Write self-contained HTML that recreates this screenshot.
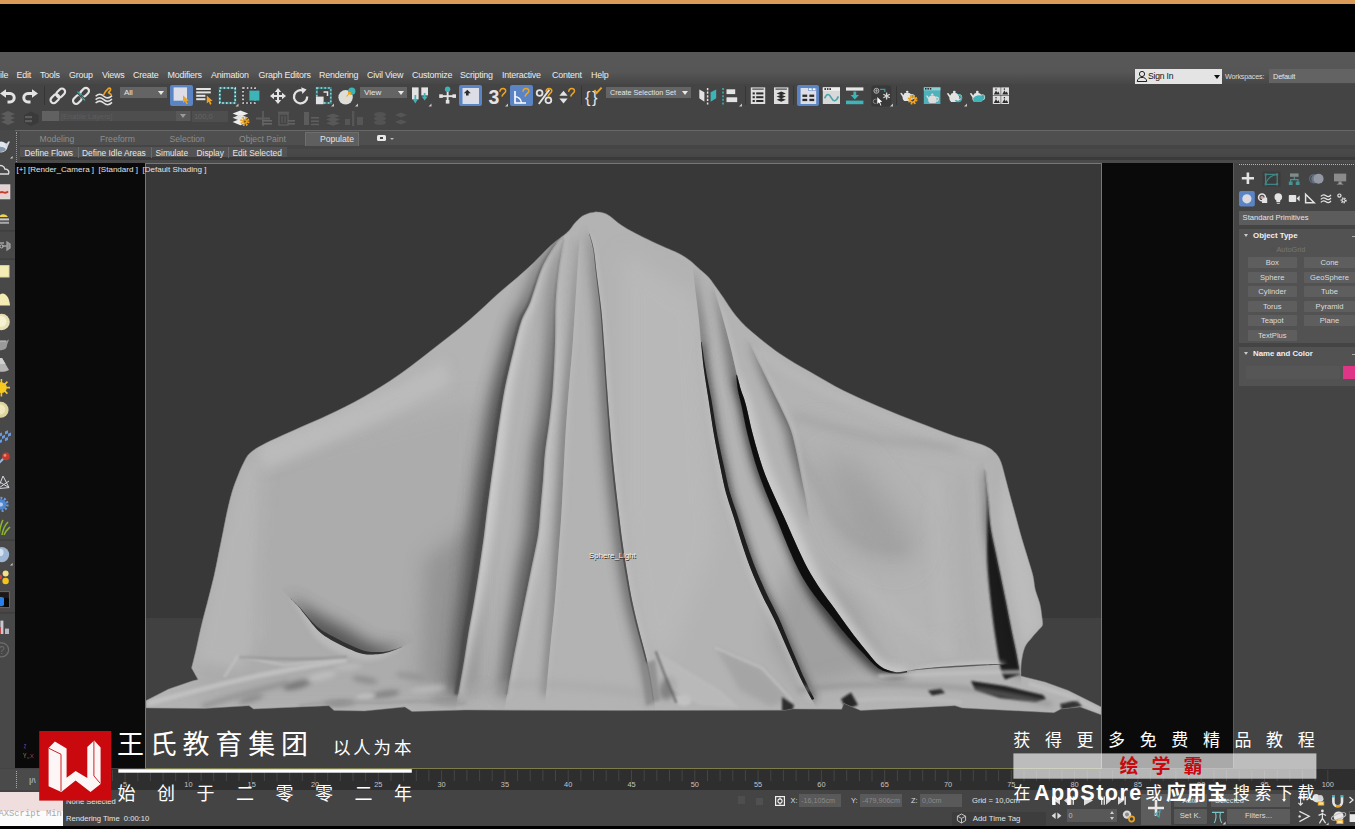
<!DOCTYPE html>
<html><head><meta charset="utf-8"><title>3ds Max</title>
<style>
*{box-sizing:border-box;margin:0;padding:0}
html,body{width:1355px;height:829px;overflow:hidden;background:#444}
body{font-family:"Liberation Sans",sans-serif;font-size:9px;color:#e0e0e0;position:relative}
.a{position:absolute}
.t{position:absolute;white-space:nowrap;line-height:1}
#orange{left:0;top:0;width:1355px;height:4px;background:#dc9a58}
#blk{left:0;top:4px;width:1355px;height:48px;background:#000}
#menubar{left:0;top:52px;width:1355px;height:32px;background:linear-gradient(#585858 0,#565656 62%,#4b4b4b 88%,#474747 100%)}
#menubar .t{top:18.5px;font-size:8.9px;letter-spacing:-0.2px;color:#ececec}
#tb{left:0;top:82px;width:1355px;height:48px;background:linear-gradient(rgba(68,68,68,0) 2px,#444 2px)}
#ribbon{left:0;top:130px;width:1355px;height:33px;background:#484848;border-top:1px solid #686868}
#vp{left:15px;top:163px;width:1218px;height:605px;background:#0a0a0a}
#frame{left:145px;top:163px;width:957px;height:606px;background:#383838;border:1px solid #7c7c4c;overflow:hidden}
#floor{left:0;top:453.5px;width:957px;height:152px;background:#414141}
#ltb{left:0;top:130px;width:15px;height:638px;background:#484848}
#rp{left:1233px;top:163px;width:122px;height:605px;background:#444}
#tl{left:0;top:769px;width:1355px;height:21px;background:#2e2e2e}
#sb{left:0;top:790px;width:1355px;height:36px;background:#444}
#bot{left:0;top:826px;width:1355px;height:3px;background:#000}
.dd{position:absolute;background:#646464;color:#e6e6e6;font-size:8px;line-height:11px;height:11px;padding-left:4px;white-space:nowrap;overflow:hidden}
.dd:after{content:"";position:absolute;right:3px;top:4px;border:3px solid transparent;border-top:4px solid #e8e8e8;border-bottom:0}
.hl{position:absolute;background:#5b84c4;border-radius:2px}
.btn{position:absolute;background:#5e5e5e;color:#dcdcdc;font-size:7.6px;text-align:center;height:11px;line-height:11px;border-radius:1px;white-space:nowrap}
.fld{position:absolute;background:#595959;color:#8a8a8a;font-size:7.6px;height:13px;line-height:13px;padding-left:2px;white-space:nowrap;overflow:hidden}
</style>
</head><body>
<div class="a" id="orange"></div><div class="a" id="blk"></div>
<div class="a" id="menubar"><span class="t" style="left:0px">ile</span><span class="t" style="left:16.5px">Edit</span><span class="t" style="left:40px">Tools</span><span class="t" style="left:69px">Group</span><span class="t" style="left:102px">Views</span><span class="t" style="left:133px">Create</span><span class="t" style="left:167.5px">Modifiers</span><span class="t" style="left:211px">Animation</span><span class="t" style="left:258.5px">Graph Editors</span><span class="t" style="left:319px">Rendering</span><span class="t" style="left:367px">Civil View</span><span class="t" style="left:412px">Customize</span><span class="t" style="left:460px">Scripting</span><span class="t" style="left:502px">Interactive</span><span class="t" style="left:552px">Content</span><span class="t" style="left:591px">Help</span><div class="a" style="left:1135px;top:16.8px;width:87px;height:14.8px;background:#e4e4e4"></div><svg class="a" style="left:1136px;top:18px" width="12" height="12" viewBox="0 0 12 12"><circle cx="6" cy="4" r="2.6" fill="none" stroke="#222" stroke-width="1"/><path d="M1.2 11.5C1.6 8.5 3.5 7.4 6 7.4S10.4 8.5 10.8 11.5Z" fill="none" stroke="#222" stroke-width="1"/></svg><span class="t" style="left:1148px;top:20.3px;font-size:8.6px;color:#111">Sign In</span><div class="a" style="left:1214px;top:22.6px;border:3px solid transparent;border-top:4.5px solid #111;border-bottom:0"></div><span class="t" style="left:1225px;top:21px;font-size:7.2px;color:#ddd">Workspaces:</span><div class="a" style="left:1269px;top:17.4px;width:86px;height:14px;background:#636363"></div><span class="t" style="left:1273px;top:21px;font-size:7.4px;color:#e6e6e6">Default</span></div>
<div class="a" id="tb"><div class="dd" style="left:120px;top:5px;width:47px">All</div><div class="dd" style="left:360px;top:5px;width:47px">View</div><div class="dd" style="left:606px;top:5px;width:85px;font-size:7.2px">Create Selection Set</div><div class="hl" style="left:170px;top:3px;width:23px;height:21px"></div><div class="hl" style="left:459px;top:3px;width:23px;height:21px"></div><div class="hl" style="left:510px;top:3px;width:23px;height:21px"></div><div class="hl" style="left:797px;top:3px;width:22px;height:21px"></div><div class="a" style="left:44px;top:4px;width:1px;height:19px;background:#363636"></div><div class="a" style="left:581px;top:4px;width:1px;height:19px;background:#363636"></div><div class="a" style="left:745px;top:4px;width:1px;height:19px;background:#363636"></div><div class="a" style="left:793px;top:4px;width:1px;height:19px;background:#363636"></div><div class="a" style="left:896px;top:4px;width:1px;height:19px;background:#363636"></div><svg class="a" style="left:0;top:0" width="1355" height="48" viewBox="0 82 1355 48"><path d="M5 93.5H10A4.2 4.2 0 0 1 10 101.9H7.5" fill="none" stroke="#e3e3e3" stroke-width="3"/><polygon points="0,93.5 6,89.2 6,97.8" fill="#e3e3e3"/><path d="M33 93.5H28A4.2 4.2 0 0 0 28 101.9H30.5" fill="none" stroke="#e3e3e3" stroke-width="3"/><polygon points="38,93.5 32,89.2 32,97.8" fill="#e3e3e3"/><g fill="none" stroke="#e3e3e3" stroke-width="2.2"><rect x="-4.9" y="-3.1" width="9.8" height="6.2" rx="3.1" transform="translate(54.9 98.8) rotate(-45)"/><rect x="-4.9" y="-3.1" width="9.8" height="6.2" rx="3.1" transform="translate(60.699999999999996 93) rotate(-45)"/></g><g fill="none" stroke="#e3e3e3" stroke-width="2.2"><rect x="-4.9" y="-3.1" width="9.8" height="6.2" rx="3.1" transform="translate(77.4 99.5) rotate(-45)"/><rect x="-4.9" y="-3.1" width="9.8" height="6.2" rx="3.1" transform="translate(84.6 92.3) rotate(-45)"/></g><path d="M78.6 93.4L83.6 98.6" stroke="#444" stroke-width="2.6"/><path d="M77.4 91.6L81 95.4M81.6 96.6L85 100.4" stroke="#3cb4b8" stroke-width="1.1"/><path d="M95.6 96.2C98.5 93.60000000000001 101 93.60000000000001 103.8 96.2S109 98.60000000000001 112 95.60000000000001" fill="none" stroke="#e3e3e3" stroke-width="1.5"/><path d="M95.6 99.6C98.5 97.0 101 97.0 103.8 99.6S109 102.0 112 99.0" fill="none" stroke="#e3e3e3" stroke-width="1.5"/><path d="M95.6 103C98.5 100.4 101 100.4 103.8 103S109 105.4 112 102.4" fill="none" stroke="#e3e3e3" stroke-width="1.5"/><path d="M103.5 95C105 92 106 90.5 107.5 89.5C108.5 87.5 110.8 87.8 110.6 89.6C110.5 91 109 91.4 108.6 92.6L111 94.4" fill="none" stroke="#f0a41e" stroke-width="1.6" stroke-linecap="round"/><rect x="173.6" y="87.4" width="13.4" height="13.3" fill="#dcdde6"/><polygon points="183.0,95.2 183.0,103.0 184.9,101.3 186.3,104.3 187.8,103.7 186.4,100.7 188.9,100.7" fill="#f0a41e"/><rect x="196.2" y="88" width="14.6" height="2" fill="#e3e3e3"/><rect x="196.2" y="91.4" width="14.6" height="2" fill="#e3e3e3"/><rect x="196.2" y="94.8" width="9.2" height="2" fill="#e3e3e3"/><rect x="196.2" y="98.2" width="9.2" height="2" fill="#e3e3e3"/><polygon points="206.8,95.6 206.8,103.4 208.7,101.7 210.1,104.7 211.6,104.1 210.2,101.1 212.7,101.1" fill="#f0a41e"/><rect x="219.8" y="88" width="15.4" height="15" fill="none" stroke="#2c7d80" stroke-width="2.2"/><rect x="219.8" y="88" width="15.4" height="15" fill="none" stroke="#d4ecec" stroke-width="1.6" stroke-dasharray="1.6 2.2"/><polygon points="238.5,106.6 238.5,103.6 235.5,106.6" fill="#c8c8c8"/><rect x="243" y="88" width="12" height="15" fill="none" stroke="#3a3a3a" stroke-width="2.2"/><rect x="243" y="88" width="12" height="15" fill="none" stroke="#e6e6e6" stroke-width="1.6" stroke-dasharray="1.6 2.2"/><rect x="249.4" y="90.6" width="10" height="10" fill="#3cb4b8"/><path d="M278 88L281.2 92H279V95H282V92.8L286 96L282 99.2V97H279V100H281.2L278 104L274.8 100H277V97H274V99.2L270 96L274 92.8V95H277V92H274.8Z" fill="#e3e3e3"/><path d="M303.5 90.8A6.6 6.6 0 1 0 307.2 96.5" fill="none" stroke="#e3e3e3" stroke-width="2.3"/><polygon points="301.2,87.2 306.6,89.6 302.4,94" fill="#e3e3e3"/><rect x="316.8" y="88" width="14" height="15" fill="none" stroke="#2c7d80" stroke-width="2.2"/><rect x="316.8" y="88" width="14" height="15" fill="none" stroke="#9fd6d8" stroke-width="1.4" stroke-dasharray="1.6 2.2"/><rect x="316" y="96.6" width="7.6" height="7.6" fill="#e3e3e3"/><path d="M323.5 92H327.5V96" fill="none" stroke="#e3e3e3" stroke-width="1.5"/><polygon points="334,106.6 334,103.6 331,106.6" fill="#c8c8c8"/><circle cx="345.6" cy="97.3" r="7.2" fill="#deded8"/><circle cx="351.8" cy="91.2" r="3.6" fill="#3cb4b8"/><path d="M346.5 96.5L350 92.5M348 92.6H350.3V95" stroke="#f0a41e" stroke-width="1.1" fill="none"/><polygon points="358,106.6 358,103.6 355,106.6" fill="#c8c8c8"/><rect x="412" y="87.4" width="6.6" height="12" fill="#e3e3e3"/><polygon points="412.6,99 418,99 415.3,103.4" fill="#3cb4b8"/><rect x="421.3" y="87.4" width="6.7" height="8" fill="#e3e3e3"/><polygon points="421.6,96.4 427.7,96.4 424.6,100.6" fill="#3cb4b8"/><rect x="423.8" y="93" width="1.7" height="4" fill="#3cb4b8"/><rect x="414.5" y="95" width="1.7" height="4.5" fill="#3cb4b8"/><polygon points="431.5,106.6 431.5,103.6 428.5,106.6" fill="#c8c8c8"/><rect x="440" y="95.2" width="15.4" height="1.9" fill="#e3e3e3"/><rect x="446.7" y="89" width="1.9" height="13" fill="#e3e3e3"/><rect x="439.2" y="94.3" width="3.6" height="3.6" fill="#e3e3e3"/><rect x="452.4" y="94.3" width="3.6" height="3.6" fill="#e3e3e3"/><rect x="445.8" y="100" width="3.6" height="3.6" fill="#e3e3e3"/><circle cx="447.6" cy="89.2" r="2.7" fill="#3cb4b8"/><rect x="462.5" y="88" width="16.5" height="16" fill="#dcdde6"/><path d="M467.3 89.8L470.8 93.2H468.6V95.6H466V93.2H463.8Z" fill="#2b2b2b"/><text x="488.6" y="104" font-family="Liberation Sans" font-weight="bold" font-size="19.5" fill="#e3e3e3">3</text><path d="M500.0 91.2C500.3 87.8 505.8 87.6 505.7 91C505.6 93.2 502.9 93.3 502.1 96" fill="none" stroke="#f0a41e" stroke-width="1.5" stroke-linecap="round"/><polygon points="508,106.6 508,103.6 505,106.6" fill="#c8c8c8"/><path d="M515 91V103H526" fill="none" stroke="#fff" stroke-width="1.6"/><path d="M515 96.6A6.4 6.4 0 0 1 521.4 103" fill="none" stroke="#fff" stroke-width="1.4"/><path d="M523.1 91.2C523.4 87.8 528.9 87.6 528.8000000000001 91C528.7 93.2 526.0 93.3 525.2 96" fill="none" stroke="#f0a41e" stroke-width="1.5" stroke-linecap="round"/><circle cx="539.6" cy="93" r="2.9" fill="none" stroke="#e3e3e3" stroke-width="1.8"/><circle cx="548.4" cy="100.3" r="2.9" fill="none" stroke="#e3e3e3" stroke-width="1.8"/><path d="M549.4 89.6L538.8 104" stroke="#e3e3e3" stroke-width="1.9"/><path d="M546.1 91.2C546.4 87.8 551.9 87.6 551.8000000000001 91C551.7 93.2 549.0 93.3 548.2 96" fill="none" stroke="#f0a41e" stroke-width="1.5" stroke-linecap="round"/><polygon points="559.4,95.8 567.6,95.8 563.5,90.8" fill="#e3e3e3"/><polygon points="559.4,98.4 567.6,98.4 563.5,103.4" fill="#e3e3e3"/><path d="M568.8 91.2C569.0999999999999 87.8 574.5999999999999 87.6 574.5 91C574.4 93.2 571.6999999999999 93.3 570.9 96" fill="none" stroke="#f0a41e" stroke-width="1.5" stroke-linecap="round"/><text x="585" y="102.6" font-family="Liberation Sans" font-size="16.5" fill="#e3e3e3" letter-spacing="1.6">{}</text><path d="M594.4 90.2L596.6 93L601.6 87.6" fill="none" stroke="#f0a41e" stroke-width="1.9"/><polygon points="699.3,89.6 704.4,92.2 704.4,101.8 699.3,98.2" fill="#e3e3e3"/><polygon points="710.6,92.2 716.2,89.6 716.2,98.2 710.6,101.8" fill="#3cb4b8"/><path d="M707.6 88V104.6" stroke="#f3d9d9" stroke-width="1.5" stroke-dasharray="2.2 1.4"/><path d="M723 88V104.6" stroke="#3cb4b8" stroke-width="1.5" stroke-dasharray="2 1.6"/><rect x="726.5" y="89.3" width="8.7" height="4.8" fill="#e3e3e3"/><rect x="726.5" y="97.3" width="10.7" height="4.8" fill="#e3e3e3"/><polygon points="742,106.6 742,103.6 739,106.6" fill="#c8c8c8"/><rect x="750.8" y="87.4" width="14.4" height="16.6" fill="#dedede"/><rect x="752.3" y="88.6" width="11.4" height="1" fill="#2b2b2b"/><rect x="752.6" y="92.4" width="2.2" height="2" fill="#2b2b2b"/><rect x="756.2" y="92.4" width="7.2" height="2" fill="#2b2b2b"/><rect x="752.6" y="96.2" width="2.2" height="2" fill="#2b2b2b"/><rect x="756.2" y="96.2" width="7.2" height="2" fill="#2b2b2b"/><rect x="752.6" y="100" width="2.2" height="2" fill="#2b2b2b"/><rect x="756.2" y="100" width="7.2" height="2" fill="#2b2b2b"/><rect x="774" y="87.4" width="14.4" height="16.6" fill="#dedede"/><rect x="775.5" y="88.6" width="11.4" height="1" fill="#2b2b2b"/><path d="M776.6 93.4L781.2 91.5L785.8 93.4L781.2 95.30000000000001Z" fill="#2b2b2b"/><path d="M776.6 96.6L781.2 94.69999999999999L785.8 96.6L781.2 98.5Z" fill="#2b2b2b"/><path d="M776.6 99.8L781.2 97.89999999999999L785.8 99.8L781.2 101.7Z" fill="#2b2b2b"/><rect x="800.6" y="88" width="15.6" height="16" fill="#dcdde6"/><rect x="808.6" y="88" width="3.4" height="2.6" fill="#fff" stroke="#5b84c4" stroke-width="0.6"/><rect x="812.4" y="88" width="3.4" height="2.6" fill="#fff" stroke="#5b84c4" stroke-width="0.6"/><rect x="802.4" y="94.6" width="4.8" height="2.3" fill="#2b2b2b"/><rect x="802.4" y="98.8" width="4.8" height="2.3" fill="#2b2b2b"/><rect x="809.4" y="94.6" width="4.8" height="2.3" fill="#2b2b2b"/><rect x="809.4" y="98.8" width="4.8" height="2.3" fill="#2b2b2b"/><rect x="822.8" y="87.4" width="17.2" height="16.6" fill="#d9d9d9"/><rect x="822.8" y="87.4" width="17.2" height="3.4" fill="#eee"/><rect x="824.4" y="88.2" width="1.6" height="1.7" fill="#2b2b2b"/><rect x="826.9" y="88.2" width="1.6" height="1.7" fill="#2b2b2b"/><rect x="829.4" y="88.2" width="1.6" height="1.7" fill="#2b2b2b"/><path d="M824.6 98.4C826.6 93.4 829 93.4 831.2 97.6S836 102 838.4 96.4" fill="none" stroke="#4aa6ad" stroke-width="1.6"/><rect x="846" y="87.4" width="17.4" height="3.2" fill="#e6e6e6"/><rect x="846" y="100.6" width="17.4" height="3.6" fill="#3cb4b8"/><rect x="853.4" y="91.6" width="2.8" height="4" fill="#3cb4b8"/><polygon points="850.6,95 859,95 854.8,99.4" fill="#3cb4b8"/><rect x="871.3" y="85.6" width="20" height="21" rx="2.5" fill="#393939"/><circle cx="876.4" cy="90.8" r="2.5" fill="none" stroke="#bdbdbd" stroke-width="0.9"/><path d="M874.6 90.8H878.2M876.4 89V92.6" stroke="#bdbdbd" stroke-width="0.7"/><path d="M880 89.4H884.8V92" fill="none" stroke="#3c9aa0" stroke-width="1.3"/><path d="M886.6 92.4V99.6M883.4 94.2L889.8 97.8M889.8 94.2L883.4 97.8" stroke="#d8d8d8" stroke-width="1.3"/><circle cx="875.4" cy="101.4" r="2.2" fill="none" stroke="#8a8a8a" stroke-width="0.9"/><polygon points="876.8,96.2 876.8,104.8 878.9,102.9 880.5,106.3 882.0,105.5 880.6,102.3 883.3,102.3" fill="#fff" stroke="#222" stroke-width="0.8"/><polygon points="893,106.6 893,103.6 890,106.6" fill="#c8c8c8"/><path d="M904.2 93.6C904.7 92.6 909.7 92.6 910.2 93.6C912.5 95.1 912.8 99.1 910.6 101.1L904.2 101.1C902.8 99.8 902.4 98.2 902.6 97.0L900.2 93.2L901.6 92.8L903.4 95.2Z" fill="#e3e3e3"/><ellipse cx="907.2" cy="91.8" rx="1.3" ry="1.1" fill="#e3e3e3"/><path d="M911.2 94.6C914.8 94.0 914.8 99.2 911.4 99.2" fill="none" stroke="#e3e3e3" stroke-width="1.3"/><circle cx="912.6" cy="99.6" r="3.6" fill="none" stroke="#f0a41e" stroke-width="2.6" stroke-dasharray="1.6 1.22"/><circle cx="912.6" cy="99.6" r="2.6" fill="none" stroke="#f0a41e" stroke-width="1.6"/><rect x="923.8" y="87.4" width="16.6" height="16.6" fill="#4fb2ba"/><rect x="923.8" y="87.4" width="16.6" height="3" fill="#8fd0d4"/><rect x="925" y="88" width="1.5" height="1.6" fill="#2b2b2b"/><rect x="927.4" y="88" width="1.5" height="1.6" fill="#2b2b2b"/><rect x="929.8" y="88" width="1.5" height="1.6" fill="#2b2b2b"/><path d="M929.6 96.2C930.0 95.3 934.5 95.3 935.0 96.2C937.1 97.5 937.3 101.1 935.4 102.9L929.6 102.9C928.3 101.8 928.0 100.3 928.2 99.3L926.0 95.8L927.3 95.5L928.9 97.6Z" fill="#dcdcdc"/><ellipse cx="932.3" cy="94.6" rx="1.2" ry="1.0" fill="#dcdcdc"/><path d="M935.9 97.1C939.1 96.6 939.1 101.2 936.1 101.2" fill="none" stroke="#dcdcdc" stroke-width="1.2"/><path d="M951.1 93.9C951.6 92.8 957.0 92.8 957.5 93.9C960.0 95.5 960.3 99.8 957.9 101.9L951.1 101.9C949.6 100.5 949.2 98.8 949.4 97.5L946.8 93.5L948.3 93.0L950.2 95.6Z" fill="#e3e3e3"/><ellipse cx="954.3" cy="92.0" rx="1.4" ry="1.2" fill="#e3e3e3"/><path d="M958.6 95.0C962.4 94.3 962.4 99.9 958.8 99.9" fill="none" stroke="#e3e3e3" stroke-width="1.4"/><path d="M955.4 100.2A3.4 3.4 0 1 0 958 94.8" fill="none" stroke="#3cb4b8" stroke-width="1.5"/><polygon points="967,106.6 967,103.6 964,106.6" fill="#c8c8c8"/><path d="M974.1 93.9C974.6 92.8 980.0 92.8 980.5 93.9C983.0 95.5 983.3 99.8 980.9 101.9L974.1 101.9C972.6 100.5 972.2 98.8 972.4 97.5L969.8 93.5L971.3 93.0L973.2 95.6Z" fill="#e3e3e3"/><ellipse cx="977.3" cy="92.0" rx="1.4" ry="1.2" fill="#e3e3e3"/><path d="M981.6 95.0C985.4 94.3 985.4 99.9 981.8 99.9" fill="none" stroke="#e3e3e3" stroke-width="1.4"/><path d="M973.4 98C976 94.6 981.6 94.4 983.4 97.4C983.6 99.4 982.6 100.6 981.2 101.9L974.2 101.9C973.2 100.6 973 99.2 973.4 98Z" fill="#3cb4b8"/><path d="M981.6 95.2C984.6 95 984.6 99.2 982 99.4" stroke="#3cb4b8" stroke-width="1.3" fill="none"/><rect x="992.8" y="87.4" width="7.8" height="8" fill="#dedede"/><path d="M993.8 94.4L996.0 90.4L997.4 92.80000000000001L998.4 91.4L999.8 94.4Z" fill="#2b2b2b"/><rect x="995.4" y="88.4" width="1.2" height="1.4" fill="#2b2b2b"/><rect x="992.8" y="96" width="7.8" height="8" fill="#dedede"/><path d="M993.8 103L996.0 99L997.4 101.4L998.4 100L999.8 103Z" fill="#2b2b2b"/><rect x="995.4" y="97" width="1.2" height="1.4" fill="#2b2b2b"/><rect x="1001.2" y="87.4" width="7.8" height="8" fill="#dedede"/><path d="M1002.2 94.4L1004.4000000000001 90.4L1005.8000000000001 92.80000000000001L1006.8000000000001 91.4L1008.2 94.4Z" fill="#2b2b2b"/><rect x="1003.8000000000001" y="88.4" width="1.2" height="1.4" fill="#2b2b2b"/><rect x="1001.2" y="96" width="7.8" height="8" fill="#dedede"/><path d="M1002.2 103L1004.4000000000001 99L1005.8000000000001 101.4L1006.8000000000001 100L1008.2 103Z" fill="#2b2b2b"/><rect x="1003.8000000000001" y="97" width="1.2" height="1.4" fill="#2b2b2b"/><path d="M1 114L8 111L15 114L8 117Z" fill="#5c5c5c"/><path d="M1 118L8 115L15 118L8 121Z" fill="#5c5c5c"/><path d="M1 122L8 119L15 122L8 125Z" fill="#5c5c5c"/><path d="M24 115L31 111.5L38.6 115V122.5L31 126L24 122.5Z" fill="#3a3a3a"/><rect x="25" y="116" width="7" height="2.2" fill="#5c5c5c"/><rect x="25" y="120" width="7" height="2.2" fill="#5c5c5c"/><path d="M232.6 113.6L240.4 110.39999999999999L248.2 113.6L240.4 116.8Z" fill="#eeeeee"/><path d="M232.6 117.8L240.4 114.6L248.2 117.8L240.4 121.0Z" fill="#e2e2e2"/><path d="M232.6 122L240.4 118.8L248.2 122L240.4 125.2Z" fill="#eeeeee"/><circle cx="244.8" cy="121.4" r="3.4" fill="none" stroke="#f0a41e" stroke-width="2.6" stroke-dasharray="1.5 1.17"/><circle cx="244.8" cy="121.4" r="2.4" fill="#f0a41e"/><circle cx="244.8" cy="121.4" r="1" fill="#555"/><path d="M263 111V126M256 118.5H270" stroke="#5c5c5c" stroke-width="1.8"/><rect x="262" y="120" width="10" height="1.6" fill="#666"/><rect x="262" y="123" width="10" height="1.6" fill="#666"/><rect x="279" y="114" width="9" height="11" fill="none" stroke="#5c5c5c" stroke-width="1.4"/><path d="M282 116V123M285 116V123" stroke="#5c5c5c" stroke-width="1.2"/><rect x="278" y="111.6" width="11" height="1.8" fill="#5c5c5c"/><rect x="288" y="120" width="7" height="1.6" fill="#626262"/><rect x="288" y="123" width="7" height="1.6" fill="#626262"/><rect x="304" y="112" width="5" height="13" fill="#5c5c5c"/><rect x="311" y="117" width="8" height="1.6" fill="#5e5e5e"/><rect x="311" y="120.4" width="8" height="1.6" fill="#5e5e5e"/><rect x="311" y="123.6" width="8" height="1.6" fill="#5e5e5e"/><path d="M326 116L333 113.4L340 116L333 118.6Z" fill="#585858"/><path d="M326 119.6L333 117.0L340 119.6L333 122.19999999999999Z" fill="#585858"/><path d="M326 123.2L333 120.60000000000001L340 123.2L333 125.8Z" fill="#585858"/><rect x="352" y="111" width="2.4" height="15" fill="#565656"/><rect x="357" y="117" width="6" height="8" fill="#565656"/><rect x="345" y="119" width="5" height="6" fill="#565656"/><ellipse cx="380" cy="114.5" rx="6" ry="2.4" fill="#535353"/><ellipse cx="380" cy="118.5" rx="6" ry="2.4" fill="#535353"/><ellipse cx="380" cy="122.5" rx="6" ry="2.4" fill="#535353"/><path d="M395 115L401 112.5L407 115L401 117.5ZM395 122L401 119.5L407 122L401 124.5Z" fill="#555"/></svg><div class="a" style="left:42px;top:29px;width:149px;height:10px;background:#4e4e4e"></div><div class="a" style="left:42px;top:29px;width:17px;height:10px;background:#616161"></div><span class="t" style="left:61px;top:30.5px;font-size:7.4px;color:#5d5d5d">[Enable Layers]</span><div class="a" style="left:176px;top:29px;width:14px;height:10px;background:#585858"></div><div class="a" style="left:180px;top:32px;border:3px solid transparent;border-top:4px solid #9a9a9a;border-bottom:0"></div><div class="a" style="left:192px;top:29px;width:36px;height:11px;background:#4e4e4e"></div><span class="t" style="left:194px;top:31px;font-size:7.4px;color:#646464">100,0</span></div>
<div class="a" id="ribbon"><div class="a" style="left:16px;top:1px;width:1px;height:30px;border-left:1px dotted #999"></div><div class="a" style="left:20px;top:0;width:1335px;height:14px;background:#4f4f4f"></div><div class="a" style="left:20px;top:14px;width:1335px;height:3.5px;background:#454545"></div><div class="a" style="left:20px;top:17.5px;width:1335px;height:8.5px;background:linear-gradient(#4a4a4a,#464646)"></div><span class="t" style="left:39.5px;top:4px;font-size:8.6px;color:#8d8d8d">Modeling</span><span class="t" style="left:100px;top:4px;font-size:8.6px;color:#8d8d8d">Freeform</span><span class="t" style="left:169.5px;top:4px;font-size:8.6px;color:#8d8d8d">Selection</span><span class="t" style="left:239px;top:4px;font-size:8.6px;color:#8d8d8d">Object Paint</span><div class="a" style="left:305px;top:1px;width:54px;height:14px;background:#5f5f5f;border:1px solid #6e6e6e;border-bottom:0"></div><span class="t" style="left:320px;top:4px;font-size:8.6px;color:#e4e4e4">Populate</span><div class="a" style="left:377px;top:4px;width:9px;height:6px;background:#e8e8e8;border-radius:1.5px"></div><div class="a" style="left:380px;top:6px;width:3px;height:2px;background:#444"></div><div class="a" style="left:390px;top:7px;border:2px solid transparent;border-top:2.5px solid #bbb;border-bottom:0"></div><div class="a" style="left:20px;top:15.5px;width:267px;height:11.5px;background:#535353"></div><div class="a" style="left:20px;top:26px;width:1335px;height:2.6px;background:#3a3a3a"></div><div class="a" style="left:20px;top:28.6px;width:1335px;height:4px;background:#4a4a4a"></div><span class="t" style="left:24.5px;top:17.5px;font-size:8.4px;color:#e6e6e6">Define Flows</span><span class="t" style="left:82px;top:17.5px;font-size:8.4px;color:#e6e6e6">Define Idle Areas</span><span class="t" style="left:155.5px;top:17.5px;font-size:8.4px;color:#e6e6e6">Simulate</span><span class="t" style="left:196.5px;top:17.5px;font-size:8.4px;color:#e6e6e6">Display</span><span class="t" style="left:232.5px;top:17.5px;font-size:8.4px;color:#e6e6e6">Edit Selected</span><div class="a" style="left:77.5px;top:16px;width:1px;height:11px;background:#6a6a6a"></div><div class="a" style="left:150.5px;top:16px;width:1px;height:11px;background:#6a6a6a"></div><div class="a" style="left:228px;top:16px;width:1px;height:11px;background:#6a6a6a"></div></div>

<div class="a" id="vp"></div>
<div class="a" id="frame"><div class="a" id="floor"></div>

<svg class="a" style="left:0;top:0" width="955" height="604" viewBox="146 164 955 604"><defs><filter id="b1" filterUnits="userSpaceOnUse" x="100" y="150" width="1050" height="640"><feGaussianBlur stdDeviation="0.6"/></filter><filter id="b2" filterUnits="userSpaceOnUse" x="100" y="150" width="1050" height="640"><feGaussianBlur stdDeviation="1"/></filter><filter id="b3" filterUnits="userSpaceOnUse" x="100" y="150" width="1050" height="640"><feGaussianBlur stdDeviation="1.6"/></filter><filter id="b4" filterUnits="userSpaceOnUse" x="100" y="150" width="1050" height="640"><feGaussianBlur stdDeviation="2.4"/></filter><filter id="b6" filterUnits="userSpaceOnUse" x="100" y="150" width="1050" height="640"><feGaussianBlur stdDeviation="4"/></filter><filter id="b8" filterUnits="userSpaceOnUse" x="100" y="150" width="1050" height="640"><feGaussianBlur stdDeviation="5"/></filter><filter id="b9" filterUnits="userSpaceOnUse" x="100" y="150" width="1050" height="640"><feGaussianBlur stdDeviation="6"/></filter><filter id="b12" filterUnits="userSpaceOnUse" x="100" y="150" width="1050" height="640"><feGaussianBlur stdDeviation="8"/></filter><filter id="b14" filterUnits="userSpaceOnUse" x="100" y="150" width="1050" height="640"><feGaussianBlur stdDeviation="10"/></filter><filter id="b22" filterUnits="userSpaceOnUse" x="100" y="150" width="1050" height="640"><feGaussianBlur stdDeviation="16"/></filter><clipPath id="cc"><path d="M596.3 211.8C594.9 212.1 590.5 212.6 588.0 213.5C585.5 214.4 583.3 215.2 581.0 217.0C578.7 218.8 576.2 221.5 574.0 224.0C571.8 226.5 571.5 228.4 567.6 232.0C563.7 235.6 556.3 240.5 550.7 245.6C545.1 250.7 539.4 257.1 533.8 262.5C528.2 267.9 522.5 272.8 516.9 277.7C511.3 282.6 507.9 285.0 500.0 292.0C492.1 299.0 479.6 311.1 469.6 319.7C459.6 328.3 451.6 334.4 440.0 343.5C428.4 352.6 412.8 365.1 400.0 374.0C387.2 382.9 375.7 390.1 363.5 397.0C351.3 403.9 339.1 409.8 327.0 415.5C314.9 421.2 301.3 426.8 291.0 431.5C280.7 436.2 271.8 439.9 265.0 443.5C258.2 447.1 253.7 449.6 250.0 453.0C246.3 456.4 245.2 459.8 243.0 464.0C240.8 468.2 238.8 473.3 237.0 478.0C235.2 482.7 233.7 486.3 232.0 492.0C230.3 497.7 228.5 505.3 227.0 512.0C225.5 518.7 224.4 525.0 223.0 532.0C221.6 539.0 220.0 546.7 218.5 554.0C217.0 561.3 215.7 568.7 214.0 576.0C212.3 583.3 210.3 590.8 208.5 598.0C206.7 605.2 204.6 612.7 203.0 619.0C201.4 625.3 200.2 630.5 199.0 636.0C197.8 641.5 196.8 646.7 195.5 652.0C194.2 657.3 192.2 665.3 191.5 668.0L198.0 679.6L192.0 681.0L168.6 689.0L146.0 700.6L146.0 708.0L204.0 708.6L249.0 705.7L253.6 709.0L329.0 705.7L334.0 710.5L364.6 711.0L404.8 707.0L412.0 711.6L465.0 710.0L625.0 710.6L785.0 710.2L792.0 709.0L841.7 709.3L844.0 703.4L860.6 710.5L955.0 705.7L962.0 708.0L1054.0 712.8L1061.0 709.0L1080.0 707.0L1101.5 715.0L1101.5 707.0L1068.4 690.4L1045.0 682.0L1021.0 676.0C1021.1 673.7 1020.8 666.8 1021.5 662.0C1022.2 657.2 1023.2 651.1 1025.0 647.0C1026.8 642.9 1029.7 640.4 1032.0 637.5C1034.3 634.6 1037.2 631.6 1039.0 629.5C1040.8 627.4 1042.1 627.1 1042.6 625.0C1043.1 622.9 1042.4 620.5 1042.0 617.0C1041.6 613.5 1041.1 608.5 1040.0 604.0C1038.9 599.5 1036.6 594.7 1035.4 590.0C1034.2 585.3 1034.3 581.1 1033.0 575.6C1031.7 570.1 1029.3 563.1 1027.5 557.0C1025.7 550.9 1023.8 545.3 1022.0 539.0C1020.2 532.7 1018.3 525.7 1016.5 519.0C1014.7 512.3 1012.8 505.5 1011.0 499.0C1009.2 492.5 1007.7 486.2 1006.0 480.0C1004.3 473.8 1002.9 466.7 1001.0 462.0C999.1 457.3 997.5 454.8 994.5 452.0C991.5 449.2 989.9 447.8 983.0 445.0C976.1 442.2 964.2 439.4 953.0 435.5C941.8 431.6 928.2 426.2 916.0 421.5C903.8 416.8 892.1 412.1 880.0 407.0C867.9 401.9 855.2 396.5 843.5 390.6C831.8 384.7 820.2 377.6 809.6 371.5C799.0 365.4 789.9 360.5 780.0 353.7C770.1 346.9 757.8 336.9 750.4 330.5C743.0 324.1 740.2 320.9 735.6 315.3C731.0 309.7 726.4 301.9 723.0 297.0C719.6 292.1 717.5 289.1 715.0 285.7C712.5 282.3 710.5 279.2 708.0 276.5C705.5 273.8 703.0 272.2 700.0 269.5C697.0 266.8 693.3 263.1 690.0 260.5C686.7 257.9 683.5 255.9 680.0 254.0C676.5 252.1 673.7 251.1 669.0 249.0C664.3 246.9 657.7 244.1 652.0 241.4C646.3 238.7 640.1 235.7 635.0 233.0C629.9 230.3 625.8 228.1 621.6 225.3C617.4 222.5 612.9 218.1 609.8 216.0C606.7 213.9 605.2 213.5 603.0 212.8C600.8 212.1 597.4 212.0 596.3 211.8Z"/></clipPath></defs><path d="M596.3 211.8C594.9 212.1 590.5 212.6 588.0 213.5C585.5 214.4 583.3 215.2 581.0 217.0C578.7 218.8 576.2 221.5 574.0 224.0C571.8 226.5 571.5 228.4 567.6 232.0C563.7 235.6 556.3 240.5 550.7 245.6C545.1 250.7 539.4 257.1 533.8 262.5C528.2 267.9 522.5 272.8 516.9 277.7C511.3 282.6 507.9 285.0 500.0 292.0C492.1 299.0 479.6 311.1 469.6 319.7C459.6 328.3 451.6 334.4 440.0 343.5C428.4 352.6 412.8 365.1 400.0 374.0C387.2 382.9 375.7 390.1 363.5 397.0C351.3 403.9 339.1 409.8 327.0 415.5C314.9 421.2 301.3 426.8 291.0 431.5C280.7 436.2 271.8 439.9 265.0 443.5C258.2 447.1 253.7 449.6 250.0 453.0C246.3 456.4 245.2 459.8 243.0 464.0C240.8 468.2 238.8 473.3 237.0 478.0C235.2 482.7 233.7 486.3 232.0 492.0C230.3 497.7 228.5 505.3 227.0 512.0C225.5 518.7 224.4 525.0 223.0 532.0C221.6 539.0 220.0 546.7 218.5 554.0C217.0 561.3 215.7 568.7 214.0 576.0C212.3 583.3 210.3 590.8 208.5 598.0C206.7 605.2 204.6 612.7 203.0 619.0C201.4 625.3 200.2 630.5 199.0 636.0C197.8 641.5 196.8 646.7 195.5 652.0C194.2 657.3 192.2 665.3 191.5 668.0L198.0 679.6L192.0 681.0L168.6 689.0L146.0 700.6L146.0 708.0L204.0 708.6L249.0 705.7L253.6 709.0L329.0 705.7L334.0 710.5L364.6 711.0L404.8 707.0L412.0 711.6L465.0 710.0L625.0 710.6L785.0 710.2L792.0 709.0L841.7 709.3L844.0 703.4L860.6 710.5L955.0 705.7L962.0 708.0L1054.0 712.8L1061.0 709.0L1080.0 707.0L1101.5 715.0L1101.5 707.0L1068.4 690.4L1045.0 682.0L1021.0 676.0C1021.1 673.7 1020.8 666.8 1021.5 662.0C1022.2 657.2 1023.2 651.1 1025.0 647.0C1026.8 642.9 1029.7 640.4 1032.0 637.5C1034.3 634.6 1037.2 631.6 1039.0 629.5C1040.8 627.4 1042.1 627.1 1042.6 625.0C1043.1 622.9 1042.4 620.5 1042.0 617.0C1041.6 613.5 1041.1 608.5 1040.0 604.0C1038.9 599.5 1036.6 594.7 1035.4 590.0C1034.2 585.3 1034.3 581.1 1033.0 575.6C1031.7 570.1 1029.3 563.1 1027.5 557.0C1025.7 550.9 1023.8 545.3 1022.0 539.0C1020.2 532.7 1018.3 525.7 1016.5 519.0C1014.7 512.3 1012.8 505.5 1011.0 499.0C1009.2 492.5 1007.7 486.2 1006.0 480.0C1004.3 473.8 1002.9 466.7 1001.0 462.0C999.1 457.3 997.5 454.8 994.5 452.0C991.5 449.2 989.9 447.8 983.0 445.0C976.1 442.2 964.2 439.4 953.0 435.5C941.8 431.6 928.2 426.2 916.0 421.5C903.8 416.8 892.1 412.1 880.0 407.0C867.9 401.9 855.2 396.5 843.5 390.6C831.8 384.7 820.2 377.6 809.6 371.5C799.0 365.4 789.9 360.5 780.0 353.7C770.1 346.9 757.8 336.9 750.4 330.5C743.0 324.1 740.2 320.9 735.6 315.3C731.0 309.7 726.4 301.9 723.0 297.0C719.6 292.1 717.5 289.1 715.0 285.7C712.5 282.3 710.5 279.2 708.0 276.5C705.5 273.8 703.0 272.2 700.0 269.5C697.0 266.8 693.3 263.1 690.0 260.5C686.7 257.9 683.5 255.9 680.0 254.0C676.5 252.1 673.7 251.1 669.0 249.0C664.3 246.9 657.7 244.1 652.0 241.4C646.3 238.7 640.1 235.7 635.0 233.0C629.9 230.3 625.8 228.1 621.6 225.3C617.4 222.5 612.9 218.1 609.8 216.0C606.7 213.9 605.2 213.5 603.0 212.8C600.8 212.1 597.4 212.0 596.3 211.8Z" fill="#b3b3b3"/><g clip-path="url(#cc)"><path d="M240 462C300 445 400 420 480 400L478 700L190 700L215 580Z" fill="#ababab" opacity="0.85" filter="url(#b14)"/><path d="M196 660L216 570L240 470L258 455L268 470L262 560L262 640L240 670Z" fill="#b7b7b7" opacity="0.85" filter="url(#b9)"/><path d="M258 446C320 422 380 396 446 360L450 384C385 420 322 446 262 472Z" fill="#bdbdbd" opacity="0.85" filter="url(#b9)"/><path d="M425 560L478 520L478 690L420 690Z" fill="#8a8a8a" opacity="0.7" filter="url(#b14)"/><path d="M622 250L700 300L716 540L670 660L640 640L622 520Z" fill="#bababa" opacity="0.8" filter="url(#b14)"/><path d="M805 420C860 425 950 445 985 462L1000 640L880 655Z" fill="#b4b4b4" opacity="0.6" filter="url(#b14)"/><path d="M822 458L852 458L916 538L902 566L850 540Z" fill="#999" opacity="0.75" filter="url(#b22)"/><path d="M790 560L850 600L885 668L800 690L770 640Z" fill="#808080" opacity="0.38" filter="url(#b14)"/><path d="M1004 470L1030 560L1042 626L1024 646L1012 600L1000 520Z" fill="#bebebe" opacity="0.8" filter="url(#b6)"/><path d="M790.0 442.0C794.2 448.3 807.0 466.7 815.0 480.0C823.0 493.3 828.8 511.2 838.0 522.0C847.2 532.8 858.8 540.7 870.0 545.0C881.2 549.3 899.2 547.5 905.0 548.0" fill="none" stroke="#9a9a9a" stroke-width="9" stroke-linecap="round" stroke-linejoin="round" opacity="0.5" filter="url(#b9)"/><path d="M934.0 480.0C934.3 490.0 935.0 520.0 936.0 540.0C937.0 560.0 938.3 581.7 940.0 600.0C941.7 618.3 945.0 641.7 946.0 650.0" fill="none" stroke="#bdbdbd" stroke-width="8" stroke-linecap="round" stroke-linejoin="round" opacity="0.5" filter="url(#b9)"/><path d="M961.0 480.0C961.3 490.0 961.8 520.0 963.0 540.0C964.2 560.0 966.0 581.7 968.0 600.0C970.0 618.3 973.8 641.7 975.0 650.0" fill="none" stroke="#a4a4a4" stroke-width="7" stroke-linecap="round" stroke-linejoin="round" opacity="0.5" filter="url(#b9)"/><path d="M850.0 575.0C855.0 579.2 869.2 590.8 880.0 600.0C890.8 609.2 903.3 621.3 915.0 630.0C926.7 638.7 944.2 648.3 950.0 652.0" fill="none" stroke="#bcbcbc" stroke-width="9" stroke-linecap="round" stroke-linejoin="round" opacity="0.5" filter="url(#b9)"/><path d="M796.6 416.7C803.0 418.6 822.0 424.3 835.0 428.0C848.0 431.7 861.1 436.4 874.4 438.9C887.7 441.4 901.1 441.8 915.0 443.0C928.9 444.2 950.6 445.5 957.7 446.0" fill="none" stroke="#9c9c9c" stroke-width="7" stroke-linecap="round" stroke-linejoin="round" opacity="0.6" filter="url(#b8)"/><path d="M760.0 352.0C766.7 356.3 785.0 369.7 800.0 378.0C815.0 386.3 833.3 394.7 850.0 402.0C866.7 409.3 883.3 415.7 900.0 422.0C916.7 428.3 935.8 435.3 950.0 440.0C964.2 444.7 979.2 448.3 985.0 450.0" fill="none" stroke="#bebebe" stroke-width="6" stroke-linecap="round" stroke-linejoin="round" opacity="0.7" filter="url(#b6)"/><clipPath id="k1"><path d="M592.1 201.6C587.7 206.7 572.1 224.9 566.0 232.0C559.9 239.1 559.7 238.1 555.7 244.0C551.7 249.9 546.2 258.0 542.0 267.6C537.8 277.2 533.9 292.4 530.4 301.4C526.9 310.4 524.0 312.9 521.0 321.7C518.0 330.5 515.3 343.1 512.6 354.0C509.9 364.9 507.2 376.1 505.0 387.0C502.8 397.9 501.3 408.8 499.6 419.6C497.9 430.4 496.4 441.9 495.0 452.0C493.6 462.1 492.3 470.3 491.0 480.0C489.7 489.7 488.2 500.8 487.0 510.0C485.8 519.2 485.3 525.0 484.0 535.0C482.7 545.0 480.7 558.7 479.0 570.0C477.3 581.3 475.6 591.8 473.8 602.6C472.0 613.4 469.7 624.9 468.0 635.0C466.3 645.1 465.3 653.0 463.6 663.0C461.9 673.0 460.1 683.1 458.0 695.0C455.9 706.9 452.3 727.8 451.1 734.4L372.3 720.6L379.2 681.2L384.7 649.8L389.1 621.7L394.9 589.3L399.9 558.1L404.7 524.4L407.6 499.9L411.8 469.1L415.8 440.7L420.5 407.4L426.5 371.4L434.9 335.0L445.2 296.1L455.8 272.5L468.8 235.3L489.4 199.3L505.3 179.9L531.3 149.5Z"/></clipPath><g clip-path="url(#k1)"><path d="M565.2 231.3C563.3 233.2 558.2 236.9 553.8 242.7C549.4 248.5 543.4 256.7 538.7 266.1C533.9 275.6 529.4 290.5 525.2 299.4C521.0 308.2 517.3 310.5 513.7 319.2C510.0 327.9 506.5 340.8 503.1 351.7C499.8 362.6 496.5 373.8 493.7 384.8C491.0 395.8 488.7 406.7 486.6 417.6C484.5 428.5 482.9 440.0 481.1 450.0C479.4 460.1 477.8 468.3 476.3 478.0C474.8 487.6 473.3 498.9 472.1 508.1C470.9 517.3 470.4 523.1 469.1 533.0C467.9 543.0 466.1 556.6 464.7 567.8C463.2 579.1 461.9 589.5 460.4 600.3C458.9 611.2 456.9 622.8 455.7 632.9C454.4 643.1 454.1 651.1 453.0 661.2C451.9 671.3 449.8 688.1 449.1 693.4L466.9 696.6C468.1 691.3 472.0 674.7 474.2 664.8C476.4 654.9 478.2 647.1 480.3 637.1C482.5 627.1 485.1 615.7 487.2 604.9C489.4 594.1 491.4 583.5 493.3 572.2C495.3 560.8 497.4 547.0 498.9 537.0C500.3 526.9 500.7 521.1 501.9 511.9C503.0 502.7 504.6 491.7 505.7 482.0C506.9 472.4 507.7 464.0 508.9 454.0C510.0 443.9 511.3 432.4 512.6 421.6C513.8 410.8 514.7 400.1 516.3 389.2C517.9 378.4 520.1 367.2 522.1 356.3C524.1 345.5 526.1 333.0 528.3 324.2C530.6 315.4 532.8 312.6 535.6 303.4C538.4 294.2 541.6 278.7 545.3 269.1C549.0 259.4 554.0 251.4 557.6 245.3C561.2 239.2 565.2 234.8 566.8 232.7Z" fill="#4a4a4a" opacity="0.95" filter="url(#b12)"/></g><clipPath id="k2"><path d="M592.1 201.6C587.7 206.7 572.1 224.9 566.0 232.0C559.9 239.1 559.7 238.1 555.7 244.0C551.7 249.9 546.2 258.0 542.0 267.6C537.8 277.2 533.9 292.4 530.4 301.4C526.9 310.4 524.0 312.9 521.0 321.7C518.0 330.5 515.3 343.1 512.6 354.0C509.9 364.9 507.2 376.1 505.0 387.0C502.8 397.9 501.3 408.8 499.6 419.6C497.9 430.4 496.4 441.9 495.0 452.0C493.6 462.1 492.3 470.3 491.0 480.0C489.7 489.7 488.2 500.8 487.0 510.0C485.8 519.2 485.3 525.0 484.0 535.0C482.7 545.0 480.7 558.7 479.0 570.0C477.3 581.3 475.6 591.8 473.8 602.6C472.0 613.4 469.7 624.9 468.0 635.0C466.3 645.1 465.3 653.0 463.6 663.0C461.9 673.0 460.1 683.1 458.0 695.0C455.9 706.9 452.3 727.8 451.1 734.4L529.9 748.2L536.8 708.8L542.5 676.2L546.9 648.3L552.7 615.9L558.1 581.9L563.3 545.6L566.4 520.1L570.2 490.9L574.2 463.3L578.7 431.8L583.5 402.6L590.3 373.0L596.8 347.3L605.0 330.3L615.2 299.9L622.0 288.7L626.7 284.1L652.8 253.8Z"/></clipPath><g clip-path="url(#k2)"><path d="M565.2 231.3C563.4 233.3 558.3 237.0 553.9 242.8C549.6 248.6 543.6 256.8 539.0 266.3C534.4 275.8 530.2 290.9 526.3 299.8C522.4 308.8 519.1 311.2 515.8 319.9C512.4 328.7 509.2 341.5 506.2 352.4C503.1 363.4 500.1 374.6 497.6 385.5C495.2 396.5 493.4 407.5 491.4 418.3C489.5 429.2 487.7 440.7 486.1 450.7C484.5 460.8 483.4 469.1 482.1 478.8C480.7 488.5 479.2 499.7 478.1 508.9C476.9 518.0 476.5 523.9 475.3 533.8C474.2 543.8 472.5 557.5 471.1 568.8C469.6 580.1 468.2 590.5 466.7 601.4C465.2 612.3 463.3 623.9 462.1 634.0C460.8 644.1 460.3 652.2 459.2 662.3C458.0 672.3 455.7 689.1 455.0 694.5L461.0 695.5C462.1 690.2 465.9 673.7 468.0 663.7C470.2 653.8 471.8 646.0 473.9 636.0C476.1 626.0 478.8 614.6 480.9 603.8C483.1 593.0 485.0 582.5 486.9 571.2C488.9 559.9 491.2 546.2 492.7 536.2C494.2 526.1 494.7 520.3 495.9 511.1C497.1 502.0 498.6 490.9 499.9 481.2C501.2 471.6 502.6 463.3 503.9 453.3C505.2 443.2 506.3 431.7 507.8 420.9C509.2 410.1 510.5 399.3 512.4 388.5C514.2 377.6 516.7 366.4 519.0 355.6C521.3 344.7 523.6 332.2 526.2 323.5C528.8 314.7 531.4 312.1 534.5 303.0C537.6 293.9 541.1 278.5 545.0 268.9C548.8 259.3 553.8 251.2 557.5 245.2C561.1 239.1 565.2 234.7 566.8 232.7Z" fill="#cdcdcd" opacity="0.9" filter="url(#b6)"/></g><path d="M565.7 231.7C563.9 233.7 559.2 237.7 555.0 243.5C550.9 249.4 545.3 257.6 540.9 267.1C536.5 276.6 532.4 291.8 528.7 300.7C525.0 309.7 521.8 312.1 518.6 320.9C515.5 329.7 512.6 342.4 509.8 353.3C507.0 364.2 504.1 375.4 501.9 386.4C499.6 397.3 498.0 408.2 496.2 419.1C494.5 429.9 493.0 441.4 491.4 451.5C489.9 461.5 488.3 469.7 486.7 479.4C485.2 489.0 483.4 500.2 482.0 509.3C480.7 518.5 480.0 524.3 478.6 534.3C477.1 544.2 474.8 557.9 473.1 569.1C471.3 580.3 469.9 590.8 468.1 601.7C466.4 612.5 464.1 624.0 462.6 634.1C461.0 644.2 460.3 652.2 458.9 662.2C457.5 672.3 454.9 689.0 454.1 694.3L458.0 695.0C458.9 689.6 461.9 673.0 463.6 663.0C465.3 653.0 466.3 645.0 468.0 635.0C469.7 624.9 472.0 613.4 473.8 602.6C475.6 591.8 477.3 581.3 479.0 570.0C480.7 558.7 482.7 545.0 484.0 535.0C485.3 525.0 485.8 519.2 487.0 510.0C488.2 500.9 489.7 489.7 491.0 480.0C492.3 470.4 493.6 462.1 495.0 452.0C496.4 441.9 497.9 430.4 499.6 419.6C501.3 408.8 502.8 397.9 505.0 387.0C507.2 376.1 509.9 364.9 512.6 354.0C515.3 343.1 518.0 330.5 521.0 321.7C524.0 312.9 526.9 310.4 530.4 301.4C533.9 292.4 537.8 277.2 542.0 267.6C546.2 258.0 551.7 249.9 555.7 244.0C559.7 238.1 564.3 234.0 566.0 232.0Z" fill="#4a4a4a" opacity="0.85" filter="url(#b2)"/><clipPath id="k3"><path d="M570.8 199.4C569.7 206.0 566.0 227.4 564.0 238.8C562.0 250.2 560.4 257.2 559.0 267.6C557.6 278.0 556.4 288.8 555.7 301.4C555.0 314.0 555.5 329.2 555.0 343.5C554.5 357.8 553.7 374.3 552.8 387.0C551.9 399.7 550.8 408.7 549.5 419.5C548.2 430.3 546.1 441.9 545.0 452.0C543.9 462.1 543.8 470.7 543.0 480.0C542.2 489.3 541.3 498.8 540.5 508.0C539.7 517.2 539.6 524.7 538.0 535.0C536.4 545.3 533.3 558.7 531.0 570.0C528.7 581.3 526.6 591.8 524.4 602.6C522.2 613.4 520.0 624.9 518.0 635.0C516.0 645.1 514.4 653.0 512.6 663.0C510.8 673.0 509.1 683.1 507.0 695.0C504.9 706.9 501.3 727.8 500.1 734.4L421.3 720.6L428.2 681.2L433.9 648.6L439.5 619.7L446.0 586.9L452.6 554.2L458.9 522.9L460.8 500.8L463.3 473.6L465.5 443.5L470.1 410.0L473.0 381.2L475.0 340.8L475.8 297.2L479.7 257.1L485.2 225.1L492.0 185.7Z"/></clipPath><g clip-path="url(#k3)"><path d="M563.0 238.6C561.9 243.4 558.4 256.8 556.5 267.3C554.6 277.7 553.0 288.5 551.7 301.2C550.5 313.9 550.2 329.1 549.0 343.3C547.9 357.5 546.3 373.9 544.8 386.4C543.3 398.9 541.9 407.6 540.1 418.4C538.3 429.1 535.5 440.7 534.1 450.8C532.6 460.9 532.5 469.7 531.5 479.1C530.6 488.4 529.4 497.9 528.5 506.9C527.6 515.9 527.7 523.1 526.1 533.2C524.6 543.3 521.3 556.4 519.2 567.6C517.1 578.8 515.5 589.5 513.6 600.4C511.8 611.4 509.7 622.9 508.2 633.1C506.6 643.3 505.6 651.3 504.2 661.5C502.9 671.6 500.8 688.4 500.1 693.8L513.9 696.2C515.1 690.9 518.6 674.4 521.0 664.5C523.3 654.7 525.4 646.9 527.8 636.9C530.2 627.0 532.7 615.5 535.2 604.8C537.7 594.0 540.3 583.7 542.8 572.4C545.2 561.0 548.2 547.4 549.9 536.8C551.5 526.3 551.7 518.4 552.5 509.1C553.2 499.8 553.9 490.2 554.5 480.9C555.0 471.6 555.2 463.2 555.9 453.2C556.7 443.1 558.1 431.6 558.9 420.6C559.7 409.7 560.4 400.4 560.8 387.6C561.1 374.8 561.2 358.0 561.0 343.7C560.8 329.4 559.6 314.2 559.7 301.6C559.8 289.0 560.6 278.4 561.5 267.9C562.4 257.5 564.4 243.8 565.0 239.0Z" fill="#505050" opacity="0.92" filter="url(#b12)"/></g><clipPath id="k4"><path d="M570.8 199.4C569.7 206.0 566.0 227.4 564.0 238.8C562.0 250.2 560.4 257.2 559.0 267.6C557.6 278.0 556.4 288.8 555.7 301.4C555.0 314.0 555.5 329.2 555.0 343.5C554.5 357.8 553.7 374.3 552.8 387.0C551.9 399.7 550.8 408.7 549.5 419.5C548.2 430.3 546.1 441.9 545.0 452.0C543.9 462.1 543.8 470.7 543.0 480.0C542.2 489.3 541.3 498.8 540.5 508.0C539.7 517.2 539.6 524.7 538.0 535.0C536.4 545.3 533.3 558.7 531.0 570.0C528.7 581.3 526.6 591.8 524.4 602.6C522.2 613.4 520.0 624.9 518.0 635.0C516.0 645.1 514.4 653.0 512.6 663.0C510.8 673.0 509.1 683.1 507.0 695.0C504.9 706.9 501.3 727.8 500.1 734.4L578.9 748.2L585.8 708.8L591.3 677.4L596.5 650.3L602.8 618.3L609.4 585.8L617.1 547.1L620.2 515.2L622.7 486.4L624.5 460.5L628.9 429.0L632.6 392.8L635.0 346.2L635.6 305.6L638.3 278.1L642.8 252.5L649.7 213.1Z"/></clipPath><g clip-path="url(#k4)"><path d="M563.0 238.6C562.0 243.4 558.8 256.9 557.2 267.4C555.5 277.8 553.9 288.6 553.0 301.3C552.0 313.9 552.2 329.1 551.4 343.4C550.7 357.6 549.6 374.1 548.4 386.7C547.2 399.3 545.8 408.1 544.3 418.9C542.7 429.6 540.3 441.2 538.9 451.3C537.5 461.4 536.9 470.1 536.0 479.4C535.1 488.8 534.4 498.3 533.5 507.4C532.7 516.4 532.6 523.7 531.1 533.9C529.6 544.2 526.7 557.5 524.7 568.7C522.7 580.0 520.8 590.6 518.9 601.5C517.1 612.4 515.1 624.0 513.5 634.1C511.9 644.3 510.8 652.3 509.4 662.4C508.0 672.5 505.8 689.3 505.0 694.7L509.0 695.3C510.1 690.1 513.6 673.5 515.8 663.6C518.1 653.7 520.1 645.9 522.5 635.9C524.8 625.9 527.4 614.5 529.9 603.7C532.3 592.9 534.8 582.5 537.3 571.3C539.8 560.0 543.2 546.5 544.9 536.1C546.6 525.6 546.6 517.9 547.5 508.6C548.3 499.4 549.4 489.9 550.0 480.6C550.6 471.2 550.3 462.7 551.1 452.7C551.9 442.6 553.7 431.0 554.7 420.1C555.8 409.2 556.6 400.1 557.2 387.3C557.9 374.6 558.4 357.9 558.6 343.6C558.8 329.3 558.0 314.2 558.4 301.5C558.8 288.9 559.7 278.3 560.8 267.8C561.9 257.4 564.3 243.8 565.0 239.0Z" fill="#c8c8c8" opacity="0.8" filter="url(#b6)"/></g><path d="M563.6 238.7C562.7 243.5 559.8 257.1 558.3 267.5C556.9 277.9 555.5 288.7 554.8 301.4C554.0 314.0 554.4 329.2 553.8 343.5C553.3 357.7 552.4 374.3 551.4 386.9C550.4 399.5 549.2 408.5 547.9 419.3C546.5 430.1 544.3 441.7 543.2 451.8C542.0 461.9 541.8 470.5 541.0 479.8C540.2 489.2 539.3 498.7 538.5 507.8C537.7 517.0 537.6 524.4 536.0 534.7C534.5 545.0 531.4 558.4 529.2 569.6C526.9 580.9 524.8 591.4 522.7 602.3C520.6 613.1 518.4 624.6 516.5 634.7C514.6 644.8 513.1 652.8 511.4 662.8C509.6 672.8 506.9 689.5 506.0 694.8L507.0 695.0C507.9 689.7 510.8 673.0 512.6 663.0C514.4 653.0 516.0 645.1 518.0 635.0C520.0 624.9 522.2 613.4 524.4 602.6C526.6 591.8 528.7 581.3 531.0 570.0C533.3 558.7 536.4 545.3 538.0 535.0C539.6 524.7 539.7 517.2 540.5 508.0C541.3 498.8 542.2 489.3 543.0 480.0C543.7 470.7 543.9 462.1 545.0 452.0C546.1 441.9 548.2 430.3 549.5 419.5C550.8 408.7 551.9 399.7 552.8 387.0C553.7 374.3 554.5 357.8 555.0 343.5C555.5 329.2 555.0 314.1 555.7 301.4C556.4 288.8 557.6 278.0 559.0 267.6C560.4 257.2 563.2 243.6 564.0 238.8Z" fill="#525252" opacity="0.8" filter="url(#b2)"/><clipPath id="k5"><path d="M582.1 202.1C581.7 208.7 580.3 228.3 579.4 242.0C578.5 255.7 577.6 268.2 576.5 284.5C575.4 300.8 574.2 322.9 573.0 340.0C571.8 357.1 570.2 372.0 569.0 387.0C567.8 402.0 566.8 414.5 565.8 430.0C564.8 445.5 564.0 465.0 563.2 480.0C562.4 495.0 561.9 506.7 561.0 520.0C560.1 533.3 559.0 546.2 558.0 560.0C557.0 573.8 556.1 587.6 554.8 602.6C553.5 617.6 551.5 634.6 550.0 650.0C548.5 665.4 547.3 680.9 546.0 695.0C544.7 709.1 543.0 728.2 542.5 734.8L462.8 727.8L466.3 687.9L470.4 642.4L475.1 595.5L478.2 554.0L481.2 514.8L483.3 475.7L486.0 425.0L489.3 380.6L493.2 334.2L496.7 279.3L499.6 236.6L502.3 196.6Z"/></clipPath><g clip-path="url(#k5)"><path d="M578.4 241.9C577.8 249.0 575.9 268.1 574.5 284.4C573.1 300.7 571.5 322.7 570.0 339.8C568.5 356.8 566.9 371.7 565.5 386.7C564.1 401.7 562.9 414.2 561.8 429.8C560.7 445.3 559.7 464.8 558.7 479.8C557.7 494.7 556.9 506.4 556.0 519.7C555.1 533.0 554.4 545.9 553.5 559.7C552.6 573.4 552.0 587.2 550.8 602.2C549.6 617.2 547.8 634.3 546.5 649.7C545.2 665.1 543.6 687.2 543.0 694.7L549.0 695.3C549.7 687.8 551.9 665.7 553.5 650.3C555.1 634.9 557.3 618.0 558.8 603.0C560.3 588.0 561.3 574.1 562.5 560.3C563.7 546.6 565.1 533.7 566.0 520.3C566.9 507.0 567.1 495.3 567.7 480.2C568.3 465.2 569.0 445.7 569.8 430.2C570.6 414.8 571.5 402.3 572.5 387.3C573.5 372.3 575.0 357.3 576.0 340.2C577.0 323.1 577.8 301.0 578.5 284.6C579.2 268.3 580.1 249.2 580.4 242.1Z" fill="#6a6a6a" opacity="0.8" filter="url(#b6)"/></g><clipPath id="k6"><path d="M582.1 202.1C581.7 208.7 580.3 228.3 579.4 242.0C578.5 255.7 577.6 268.2 576.5 284.5C575.4 300.8 574.2 322.9 573.0 340.0C571.8 357.1 570.2 372.0 569.0 387.0C567.8 402.0 566.8 414.5 565.8 430.0C564.8 445.5 564.0 465.0 563.2 480.0C562.4 495.0 561.9 506.7 561.0 520.0C560.1 533.3 559.0 546.2 558.0 560.0C557.0 573.8 556.1 587.6 554.8 602.6C553.5 617.6 551.5 634.6 550.0 650.0C548.5 665.4 547.3 680.9 546.0 695.0C544.7 709.1 543.0 728.2 542.5 734.8L622.1 741.9L625.7 702.1L629.6 657.6L634.5 609.7L637.8 566.0L640.8 525.2L643.1 484.3L645.6 435.0L648.7 393.4L652.8 345.8L656.3 289.7L659.2 247.4L661.9 207.5Z"/></clipPath><g clip-path="url(#k6)"><path d="M578.4 241.9C577.8 249.0 575.9 268.1 574.5 284.4C573.1 300.7 571.5 322.7 570.0 339.8C568.5 356.8 566.9 371.7 565.5 386.7C564.1 401.7 562.9 414.2 561.8 429.8C560.8 445.3 560.0 464.8 559.2 479.8C558.4 494.8 557.8 506.4 557.0 519.7C556.2 533.1 555.4 546.0 554.5 559.7C553.6 573.5 553.0 587.3 551.8 602.3C550.6 617.3 548.8 634.3 547.5 649.8C546.2 665.2 544.6 687.3 544.0 694.8L548.0 695.2C548.7 687.7 550.9 665.6 552.5 650.2C554.1 634.9 556.3 617.9 557.8 602.9C559.3 587.9 560.3 574.0 561.5 560.3C562.7 546.5 564.0 533.6 565.0 520.3C565.9 506.9 566.4 495.2 567.2 480.2C568.0 465.2 568.9 445.7 569.8 430.2C570.7 414.8 571.5 402.3 572.5 387.3C573.5 372.3 575.0 357.3 576.0 340.2C577.0 323.1 577.8 301.0 578.5 284.6C579.2 268.3 580.1 249.2 580.4 242.1Z" fill="#bebebe" opacity="0.5" filter="url(#b4)"/></g><clipPath id="k7"><path d="M578.8 195.2C580.6 201.7 587.0 224.8 589.5 233.8C592.0 242.8 592.5 242.0 593.7 249.0C595.0 256.0 595.7 265.9 597.0 276.0C598.3 286.1 600.1 298.6 601.3 309.8C602.5 321.1 603.0 330.6 604.0 343.5C605.0 356.4 606.1 374.3 607.0 387.0C607.9 399.7 608.7 409.1 609.5 419.6C610.3 430.1 611.1 439.9 612.0 450.0C612.9 460.1 613.9 470.0 615.0 480.0C616.1 490.0 617.3 499.7 618.5 510.0C619.7 520.3 621.0 531.5 622.4 541.8C623.8 552.1 625.3 561.9 627.0 572.0C628.7 582.1 630.5 592.9 632.5 602.6C634.5 612.3 636.8 621.0 639.0 630.0C641.2 639.0 644.0 648.3 646.0 656.6C648.0 664.9 649.7 672.8 651.0 680.0C652.3 687.2 652.5 690.1 654.0 700.0C655.5 709.9 658.9 733.0 659.9 739.6L580.8 751.4L574.9 711.9L572.3 694.5L568.2 675.3L561.4 649.4L554.2 618.8L548.1 585.1L543.1 552.7L539.1 519.5L535.5 488.6L532.3 457.3L529.8 425.9L527.2 392.8L524.2 349.4L521.7 318.1L517.6 285.9L514.9 263.0L512.4 255.1L501.7 216.6Z"/></clipPath><g clip-path="url(#k7)"><path d="M588.5 234.1C589.0 236.6 590.6 242.3 591.4 249.4C592.2 256.5 592.5 266.3 593.4 276.4C594.3 286.6 595.8 299.0 596.7 310.3C597.6 321.5 597.8 331.0 598.5 343.9C599.2 356.8 600.1 374.7 600.8 387.4C601.6 400.1 602.2 409.6 602.9 420.1C603.6 430.7 604.2 440.5 605.0 450.6C605.9 460.7 607.0 470.7 608.0 480.8C609.1 490.8 610.3 500.5 611.5 510.8C612.8 521.2 614.0 532.4 615.5 542.8C616.9 553.1 618.4 562.9 620.1 573.1C621.8 583.3 623.8 594.2 625.9 604.0C628.0 613.7 630.5 622.5 632.9 631.5C635.3 640.5 638.2 649.7 640.4 657.9C642.6 666.2 644.6 673.8 646.2 680.9C647.8 688.0 649.4 697.3 650.0 700.6L658.0 699.4C657.6 696.0 656.9 686.5 655.8 679.1C654.7 671.8 653.4 663.7 651.6 655.3C649.8 646.8 647.2 637.5 645.1 628.5C643.0 619.5 641.0 610.8 639.1 601.2C637.2 591.6 635.5 580.9 633.9 570.9C632.3 560.8 630.7 551.1 629.3 540.8C627.9 530.6 626.7 519.4 625.5 509.2C624.2 498.9 623.0 489.2 622.0 479.2C620.9 469.3 619.9 459.4 619.0 449.4C618.0 439.3 617.1 429.5 616.1 419.1C615.1 408.6 614.3 399.2 613.2 386.6C612.1 373.9 610.7 356.0 609.5 343.1C608.3 330.2 607.4 320.6 605.9 309.3C604.4 298.1 602.3 285.7 600.6 275.6C598.9 265.4 597.7 255.6 596.0 248.6C594.3 241.6 591.4 236.0 590.5 233.5Z" fill="#5c5c5c" opacity="0.88" filter="url(#b9)"/></g><clipPath id="k8"><path d="M578.8 195.2C580.6 201.7 587.0 224.8 589.5 233.8C592.0 242.8 592.5 242.0 593.7 249.0C595.0 256.0 595.7 265.9 597.0 276.0C598.3 286.1 600.1 298.6 601.3 309.8C602.5 321.1 603.0 330.6 604.0 343.5C605.0 356.4 606.1 374.3 607.0 387.0C607.9 399.7 608.7 409.1 609.5 419.6C610.3 430.1 611.1 439.9 612.0 450.0C612.9 460.1 613.9 470.0 615.0 480.0C616.1 490.0 617.3 499.7 618.5 510.0C619.7 520.3 621.0 531.5 622.4 541.8C623.8 552.1 625.3 561.9 627.0 572.0C628.7 582.1 630.5 592.9 632.5 602.6C634.5 612.3 636.8 621.0 639.0 630.0C641.2 639.0 644.0 648.3 646.0 656.6C648.0 664.9 649.7 672.8 651.0 680.0C652.3 687.2 652.5 690.1 654.0 700.0C655.5 709.9 658.9 733.0 659.9 739.6L739.0 727.7L733.1 688.1L729.7 665.5L723.8 637.9L716.6 610.6L710.8 586.4L705.9 558.9L701.7 530.9L697.9 500.5L694.5 471.4L691.7 442.7L689.2 413.3L686.8 381.2L683.8 337.6L680.9 301.5L676.4 266.1L672.5 235.0L666.6 212.5L656.0 173.9Z"/></clipPath><g clip-path="url(#k8)"><path d="M588.5 234.1C589.1 236.6 591.1 242.2 592.1 249.3C593.1 256.3 593.7 266.1 594.8 276.3C595.8 286.4 597.4 298.9 598.4 310.1C599.4 321.3 599.9 330.9 600.8 343.7C601.6 356.6 602.6 374.6 603.4 387.3C604.3 400.0 604.9 409.4 605.6 419.9C606.4 430.4 607.1 440.3 608.0 450.4C608.9 460.5 609.9 470.4 611.0 480.4C612.1 490.4 613.3 500.2 614.5 510.5C615.8 520.8 617.1 532.0 618.6 542.3C620.1 552.7 621.7 562.4 623.5 572.6C625.3 582.7 627.2 593.6 629.3 603.3C631.4 612.9 633.8 621.7 636.2 630.7C638.5 639.7 641.4 648.9 643.4 657.2C645.5 665.5 647.3 673.2 648.7 680.4C650.2 687.6 651.5 697.0 652.0 700.3L656.0 699.7C655.5 696.3 654.5 686.9 653.3 679.6C652.0 672.3 650.5 664.4 648.6 656.0C646.6 647.6 644.0 638.3 641.8 629.3C639.7 620.3 637.6 611.6 635.7 601.9C633.8 592.3 632.1 581.5 630.5 571.4C628.9 561.3 627.6 551.6 626.2 541.3C624.9 531.0 623.7 519.8 622.5 509.5C621.3 499.2 620.1 489.6 619.0 479.6C617.9 469.6 616.9 459.7 616.0 449.6C615.0 439.6 614.3 429.8 613.4 419.3C612.5 408.8 611.6 399.4 610.6 386.7C609.5 374.1 608.3 356.1 607.2 343.3C606.2 330.4 605.5 320.8 604.2 309.5C602.8 298.2 600.7 285.9 599.2 275.7C597.8 265.6 596.8 255.7 595.3 248.7C593.8 241.7 591.3 236.1 590.5 233.5Z" fill="#c2c2c2" opacity="0.6" filter="url(#b4)"/></g><path d="M589.1 233.9C589.8 236.4 591.9 242.1 593.1 249.1C594.3 256.1 595.0 266.0 596.2 276.1C597.4 286.2 599.1 298.7 600.3 309.9C601.4 321.2 601.9 330.7 602.8 343.6C603.7 356.5 604.8 374.4 605.7 387.1C606.5 399.8 607.2 409.2 608.0 419.7C608.8 430.2 609.5 440.1 610.4 450.1C611.2 460.2 612.2 470.2 613.2 480.2C614.3 490.2 615.5 499.9 616.7 510.2C617.9 520.5 619.2 531.7 620.6 542.0C622.0 552.4 623.5 562.1 625.2 572.3C627.0 582.4 628.8 593.3 630.8 602.9C632.9 612.6 635.1 621.4 637.4 630.4C639.7 639.4 642.5 648.6 644.5 657.0C646.6 665.3 648.3 673.0 649.7 680.2C651.1 687.5 652.3 696.9 652.8 700.2L654.0 700.0C653.5 696.7 652.3 687.2 651.0 680.0C649.7 672.8 648.0 664.9 646.0 656.6C644.0 648.3 641.2 639.0 639.0 630.0C636.7 621.0 634.5 612.3 632.5 602.6C630.5 592.9 628.7 582.1 627.0 572.0C625.3 561.9 623.8 552.1 622.4 541.8C621.0 531.5 619.7 520.3 618.5 510.0C617.3 499.7 616.1 490.0 615.0 480.0C613.9 470.0 612.9 460.1 612.0 450.0C611.1 439.9 610.3 430.1 609.5 419.6C608.7 409.1 607.9 399.7 607.0 387.0C606.1 374.3 605.0 356.4 604.0 343.5C603.1 330.6 602.5 321.1 601.3 309.8C600.1 298.6 598.3 286.1 597.0 276.0C595.7 265.9 595.0 256.0 593.7 249.0C592.5 242.0 590.2 236.3 589.5 233.8Z" fill="#484848" opacity="0.85" filter="url(#b1)"/><clipPath id="k9"><path d="M688.2 230.3C689.0 236.9 691.7 259.2 693.0 270.0C694.3 280.8 695.0 286.7 696.0 295.0C697.0 303.3 698.2 312.2 699.0 320.0C699.8 327.8 700.1 331.7 701.0 342.0C701.9 352.3 704.0 375.2 704.6 381.8L784.3 374.6L780.7 334.8L778.6 311.5L775.4 285.5L772.4 260.5L767.7 220.8Z"/></clipPath><g clip-path="url(#k9)"><path d="M692.5 270.1C692.6 274.3 692.8 286.9 693.0 295.4C693.3 303.8 693.7 312.7 694.0 320.5C694.4 328.4 694.9 338.9 695.0 342.5L707.0 341.5C706.5 337.8 705.3 327.3 704.0 319.5C702.6 311.7 700.7 302.9 699.0 294.6C697.2 286.4 694.4 274.1 693.5 269.9Z" fill="#707070" opacity="0.75" filter="url(#b6)"/></g><clipPath id="k10"><path d="M696.7 302.2C697.4 308.9 699.8 330.7 701.0 342.0C702.2 353.3 702.7 360.3 704.0 370.0C705.3 379.7 706.9 389.2 708.6 400.0C710.3 410.8 712.0 423.8 714.0 435.0C716.0 446.2 718.4 457.8 720.4 467.5C722.4 477.2 723.7 484.6 726.0 493.0C728.3 501.4 731.3 509.5 734.0 518.0C736.7 526.5 739.2 535.5 742.0 544.0C744.8 552.5 747.5 560.5 750.8 569.0C754.1 577.5 758.1 586.6 762.0 595.0C765.9 603.4 770.2 610.7 774.4 619.5C778.6 628.3 782.5 637.9 787.0 648.0C791.5 658.1 797.2 671.3 801.4 680.0C805.6 688.7 807.1 690.8 812.0 700.0C816.9 709.2 827.6 729.5 830.7 735.3L901.4 697.9L882.7 662.5L873.5 645.3L860.1 615.4L846.8 585.4L834.5 561.1L825.3 539.8L818.0 519.0L810.3 494.1L803.2 472.2L798.7 451.3L792.8 421.2L787.7 387.8L783.3 359.6L780.5 333.5L776.3 293.7Z"/></clipPath><g clip-path="url(#k10)"><path d="M697.0 342.4C697.4 347.1 698.4 360.9 699.5 370.6C700.6 380.3 702.1 389.9 703.6 400.8C705.1 411.7 706.6 424.6 708.5 436.0C710.3 447.3 712.6 459.0 714.5 468.7C716.5 478.5 717.9 486.0 720.2 494.6C722.5 503.1 725.6 511.2 728.3 519.8C731.0 528.3 733.5 537.3 736.3 545.9C739.1 554.4 741.8 562.6 745.2 571.2C748.6 579.8 752.5 589.1 756.6 597.5C760.6 606.0 765.0 613.1 769.3 621.9C773.6 630.7 777.7 640.1 782.4 650.1C787.0 660.1 793.0 673.3 797.3 682.0C801.7 690.6 806.6 698.6 808.5 701.9L815.5 698.1C813.9 694.8 809.5 686.7 805.5 678.0C801.5 669.3 796.0 656.1 791.6 645.9C787.3 635.8 783.5 626.0 779.5 617.1C775.4 608.2 771.3 600.8 767.4 592.5C763.6 584.1 759.7 575.2 756.4 566.8C753.1 558.4 750.5 550.6 747.7 542.1C744.9 533.7 742.4 524.7 739.7 516.2C737.1 507.8 734.0 499.8 731.8 491.4C729.6 483.1 728.3 475.9 726.3 466.3C724.2 456.7 721.6 445.2 719.5 434.0C717.4 422.9 715.5 410.0 713.6 399.2C711.8 388.5 709.9 379.0 708.5 369.4C707.1 359.8 705.6 346.2 705.0 341.6Z" fill="#3c3c3c" opacity="0.92" filter="url(#b6)"/></g><clipPath id="k11"><path d="M696.7 302.2C697.4 308.9 699.8 330.7 701.0 342.0C702.2 353.3 702.7 360.3 704.0 370.0C705.3 379.7 706.9 389.2 708.6 400.0C710.3 410.8 712.0 423.8 714.0 435.0C716.0 446.2 718.4 457.8 720.4 467.5C722.4 477.2 723.7 484.6 726.0 493.0C728.3 501.4 731.3 509.5 734.0 518.0C736.7 526.5 739.2 535.5 742.0 544.0C744.8 552.5 747.5 560.5 750.8 569.0C754.1 577.5 758.1 586.6 762.0 595.0C765.9 603.4 770.2 610.7 774.4 619.5C778.6 628.3 782.5 637.9 787.0 648.0C791.5 658.1 797.2 671.3 801.4 680.0C805.6 688.7 807.1 690.8 812.0 700.0C816.9 709.2 827.6 729.5 830.7 735.3L760.0 772.8L741.3 737.5L729.3 714.7L713.9 680.6L702.0 653.6L689.5 628.9L676.3 598.2L666.0 569.0L657.7 541.9L648.8 513.8L642.1 483.7L635.2 448.8L629.5 412.2L624.7 380.4L621.5 350.5L617.2 310.8Z"/></clipPath><g clip-path="url(#k11)"><path d="M700.0 342.1C700.4 346.8 701.2 360.5 702.2 370.2C703.3 379.9 704.6 389.5 706.1 400.4C707.5 411.3 709.1 424.2 710.9 435.5C712.7 446.8 715.0 458.5 716.9 468.2C718.8 478.0 720.0 485.5 722.2 494.0C724.4 502.5 727.5 510.7 730.2 519.2C732.8 527.7 735.4 536.7 738.2 545.3C741.0 553.8 743.7 561.9 747.1 570.5C750.4 579.0 754.4 588.2 758.4 596.7C762.3 605.2 766.6 612.4 770.8 621.2C775.0 630.0 779.0 639.5 783.6 649.5C788.2 659.6 794.1 672.8 798.3 681.5C802.6 690.1 807.5 698.1 809.3 701.4L814.7 698.6C813.0 695.3 808.5 687.2 804.5 678.5C800.4 669.8 794.8 656.6 790.4 646.5C786.0 636.3 782.2 626.7 778.0 617.8C773.9 608.9 769.5 601.7 765.6 593.3C761.7 584.9 757.8 576.0 754.5 567.5C751.2 559.1 748.6 551.2 745.8 542.7C743.0 534.3 740.5 525.3 737.8 516.8C735.1 508.3 732.1 500.3 729.8 492.0C727.5 483.6 726.0 476.4 723.9 466.8C721.8 457.2 719.2 445.7 717.1 434.5C715.0 423.3 713.0 410.4 711.1 399.6C709.2 388.8 707.3 379.4 705.8 369.8C704.2 360.2 702.6 346.5 702.0 341.9Z" fill="#c2c2c2" opacity="0.6" filter="url(#b4)"/></g><path d="M701.0 342.0C701.5 346.7 702.7 360.3 704.0 370.0C705.3 379.7 706.9 389.2 708.6 400.0C710.3 410.8 712.0 423.8 714.0 435.0C716.0 446.3 718.4 457.8 720.4 467.5C722.4 477.2 723.7 484.6 726.0 493.0C728.3 501.4 731.3 509.5 734.0 518.0C736.7 526.5 739.2 535.5 742.0 544.0C744.8 552.5 747.5 560.5 750.8 569.0C754.1 577.5 758.1 586.6 762.0 595.0C765.9 603.4 770.2 610.7 774.4 619.5C778.6 628.3 782.5 637.9 787.0 648.0C791.5 658.1 797.2 671.3 801.4 680.0C805.6 688.6 810.2 696.6 812.0 700.0L814.2 698.8C812.6 695.5 808.3 687.3 804.4 678.6C800.5 669.8 795.0 656.5 790.7 646.4C786.4 636.2 782.5 626.5 778.5 617.6C774.4 608.7 770.2 601.4 766.3 593.0C762.4 584.6 758.5 575.7 755.1 567.3C751.8 558.9 749.1 551.0 746.2 542.6C743.4 534.2 740.7 525.2 737.9 516.8C735.2 508.3 732.1 500.3 729.7 492.0C727.4 483.6 726.1 476.3 724.0 466.7C721.9 457.2 719.3 445.6 717.2 434.4C715.1 423.2 713.3 410.3 711.4 399.5C709.5 388.8 707.4 379.4 705.8 369.8C704.1 360.1 702.3 346.6 701.6 341.9Z" fill="#1a1a1a" opacity="0.95" filter="url(#b1)"/><clipPath id="k12"><path d="M702.6 249.6C704.5 256.0 710.8 277.1 714.0 288.0C717.2 298.9 719.3 305.5 722.0 315.0C724.7 324.5 727.5 335.0 730.0 345.0C732.5 355.0 734.3 363.5 737.0 375.0C739.7 386.5 744.6 407.5 746.1 414.0L668.2 432.1L659.1 393.2L652.4 364.4L645.0 336.6L637.3 310.7L625.9 272.4Z"/></clipPath><g clip-path="url(#k12)"><path d="M713.5 288.1C714.5 292.8 717.3 306.1 719.1 315.8C720.9 325.5 722.5 336.3 724.2 346.5C725.9 356.6 728.4 371.8 729.2 376.8L744.8 373.2C743.3 368.2 739.1 353.4 735.8 343.5C732.5 333.7 728.4 323.5 724.9 314.2C721.3 304.9 716.2 292.2 714.5 287.9Z" fill="#6c6c6c" opacity="0.8" filter="url(#b6)"/></g><clipPath id="k13"><path d="M702.6 249.6C704.5 256.0 710.8 277.1 714.0 288.0C717.2 298.9 719.3 305.5 722.0 315.0C724.7 324.5 727.5 335.0 730.0 345.0C732.5 355.0 734.3 363.5 737.0 375.0C739.7 386.5 744.6 407.5 746.1 414.0L824.0 395.8L814.9 356.8L807.6 325.6L799.0 293.4L790.7 265.3L779.3 226.9Z"/></clipPath><g clip-path="url(#k13)"><path d="M713.5 288.1C714.6 292.7 717.8 305.9 720.1 315.5C722.3 325.1 724.9 335.7 727.1 345.7C729.3 355.8 732.1 370.9 733.1 375.9L740.9 374.1C739.6 369.1 735.7 354.2 732.9 344.3C730.1 334.3 727.0 323.9 723.9 314.5C720.9 305.1 716.1 292.3 714.5 287.9Z" fill="#c4c4c4" opacity="0.6" filter="url(#b4)"/></g><clipPath id="k14"><path d="M726.7 336.4C728.4 342.8 734.6 366.1 737.0 375.0C739.4 383.9 739.5 385.2 741.0 390.0C742.5 394.8 743.7 396.5 745.7 404.0C747.7 411.5 750.2 424.4 753.0 435.0C755.8 445.6 759.3 457.8 762.6 467.5C765.9 477.2 769.4 484.6 773.0 493.0C776.6 501.4 780.7 509.5 784.5 518.0C788.3 526.5 792.1 535.5 796.0 544.0C799.9 552.5 803.8 561.3 808.0 569.0C812.2 576.7 816.5 583.3 821.0 590.0C825.5 596.7 830.2 602.3 835.0 609.0C839.8 615.7 844.9 623.2 850.0 630.0C855.1 636.8 860.6 644.0 865.6 650.0C870.6 656.0 875.1 662.3 880.0 666.0C884.9 669.7 890.5 671.2 895.0 672.0C899.5 672.8 898.4 671.7 907.0 671.0C915.6 670.3 940.2 668.2 946.9 667.7L953.5 747.4L913.6 750.7L880.4 750.7L832.1 730.1L804.1 701.2L785.9 677.8L770.2 656.0L754.7 634.8L737.7 607.2L723.3 577.5L711.6 550.9L699.6 524.8L687.0 493.6L675.7 455.6L668.4 424.6L664.4 413.0L659.7 395.6L649.4 357.0Z"/></clipPath><g clip-path="url(#k14)"><path d="M731.2 376.5C731.8 379.1 733.4 387.0 734.6 391.9C735.8 396.8 736.8 398.4 738.6 405.9C740.4 413.4 742.6 426.3 745.3 437.1C747.9 447.8 751.2 460.4 754.4 470.3C757.7 480.2 761.1 488.0 764.7 496.6C768.4 505.1 772.5 513.1 776.3 521.7C780.0 530.3 783.5 539.3 787.2 548.0C790.9 556.8 794.5 566.0 798.3 574.3C802.2 582.5 806.0 590.1 810.2 597.3C814.5 604.4 819.0 610.3 823.9 617.0C828.9 623.7 834.2 631.0 839.8 637.6C845.5 644.1 852.0 650.7 857.9 656.4C863.9 662.1 869.6 668.5 875.6 671.9C881.6 675.3 888.8 676.6 894.1 676.9C899.4 677.3 905.1 674.5 907.2 674.0L906.8 668.0C904.9 667.9 899.6 668.4 895.9 667.1C892.2 665.8 888.2 664.0 884.4 660.1C880.6 656.2 877.3 649.9 873.3 643.6C869.2 637.3 864.7 629.5 860.2 622.4C855.6 615.3 850.8 607.6 846.1 601.0C841.3 594.4 836.5 588.9 831.8 582.7C827.0 576.5 822.2 570.9 817.7 563.7C813.2 556.6 808.9 548.2 804.8 540.0C800.6 531.7 796.6 522.7 792.7 514.3C788.8 505.9 784.9 497.7 781.3 489.4C777.6 481.1 774.2 474.1 770.8 464.7C767.4 455.3 763.7 443.4 760.7 432.9C757.7 422.5 755.0 409.6 752.8 402.1C750.6 394.6 749.1 392.9 747.4 388.1C745.7 383.3 743.6 375.9 742.8 373.5Z" fill="#363636" opacity="0.95" filter="url(#b8)"/></g><clipPath id="k15"><path d="M726.7 336.4C728.4 342.8 734.6 366.1 737.0 375.0C739.4 383.9 739.5 385.2 741.0 390.0C742.5 394.8 743.7 396.5 745.7 404.0C747.7 411.5 750.2 424.4 753.0 435.0C755.8 445.6 759.3 457.8 762.6 467.5C765.9 477.2 769.4 484.6 773.0 493.0C776.6 501.4 780.7 509.5 784.5 518.0C788.3 526.5 792.1 535.5 796.0 544.0C799.9 552.5 803.8 561.3 808.0 569.0C812.2 576.7 816.5 583.3 821.0 590.0C825.5 596.7 830.2 602.3 835.0 609.0C839.8 615.7 844.9 623.2 850.0 630.0C855.1 636.8 860.6 644.0 865.6 650.0C870.6 656.0 875.1 662.3 880.0 666.0C884.9 669.7 890.5 671.2 895.0 672.0C899.5 672.8 898.4 671.7 907.0 671.0C915.6 670.3 940.2 668.2 946.9 667.7L940.2 588.0L900.4 591.3L909.6 593.3L927.9 601.9L927.1 598.8L914.1 582.2L899.8 562.0L887.3 545.2L878.3 530.8L868.7 510.5L857.4 485.1L846.4 461.2L838.2 441.4L830.3 414.4L823.0 383.4L817.6 367.0L814.3 354.4L804.0 315.7Z"/></clipPath><g clip-path="url(#k15)"><path d="M734.1 375.8C734.6 378.3 736.0 386.2 737.1 391.2C738.2 396.1 739.1 397.8 740.7 405.3C742.4 412.9 744.5 425.8 747.0 436.6C749.5 447.3 752.7 459.9 755.9 469.8C759.0 479.7 762.4 487.5 766.0 496.1C769.5 504.6 773.4 512.7 777.2 521.3C781.0 529.8 784.7 538.8 788.7 547.3C792.7 555.9 796.8 564.9 801.2 572.7C805.6 580.5 810.3 587.3 815.0 594.0C819.8 600.7 824.6 606.3 829.6 612.9C834.6 619.5 839.8 626.9 845.1 633.7C850.4 640.4 856.0 647.5 861.3 653.6C866.6 659.6 871.5 666.2 877.0 670.1C882.4 673.9 889.1 675.6 894.2 676.5C899.2 677.3 905.1 675.2 907.3 675.0L906.7 667.0C904.9 667.1 899.8 668.4 895.8 667.5C891.9 666.7 887.4 665.5 883.0 661.9C878.7 658.4 874.6 652.4 869.9 646.4C865.2 640.5 859.8 633.2 854.9 626.3C850.0 619.4 845.1 611.8 840.4 605.1C835.7 598.4 831.2 592.6 827.0 586.0C822.7 579.3 818.7 572.9 814.8 565.3C810.8 557.8 807.1 549.1 803.3 540.7C799.4 532.2 795.7 523.2 791.8 514.7C787.9 506.3 783.8 498.2 780.0 489.9C776.3 481.7 772.9 474.6 769.3 465.2C765.8 455.8 762.1 443.8 759.0 433.4C755.9 423.0 753.0 410.1 750.7 402.7C748.3 395.2 746.7 393.6 744.9 388.8C743.1 384.1 740.7 376.7 739.9 374.2Z" fill="#cecece" opacity="0.9" filter="url(#b6)"/></g><path d="M736.2 375.2C736.5 377.8 737.2 385.8 738.0 390.8C738.9 395.8 739.7 397.5 741.3 405.1C743.0 412.7 745.3 425.6 748.0 436.3C750.6 447.0 754.1 459.4 757.3 469.3C760.5 479.2 763.7 486.9 767.1 495.5C770.5 504.1 774.1 512.3 777.6 521.0C781.2 529.7 784.5 538.8 788.3 547.5C792.0 556.2 796.0 565.3 800.2 573.2C804.5 581.1 809.2 588.1 814.0 594.8C818.8 601.5 823.8 607.0 829.0 613.5C834.2 620.0 839.7 627.1 845.3 633.7C850.9 640.2 857.0 646.9 862.6 652.6C868.1 658.4 873.1 664.6 878.4 668.2C883.8 671.7 889.9 673.1 894.7 673.8C899.5 674.5 905.1 672.6 907.1 672.4L907.0 671.0C905.0 671.2 899.5 672.8 895.0 672.0C890.5 671.2 884.9 669.7 880.0 666.0C875.1 662.3 870.6 656.0 865.6 649.9C860.5 643.9 855.0 636.8 849.9 629.9C844.8 623.1 839.8 615.6 834.9 608.9C830.1 602.3 825.5 596.6 821.0 590.0C816.5 583.3 812.2 576.7 808.0 569.0C803.8 561.3 799.9 552.5 796.0 544.0C792.1 535.6 788.4 526.6 784.5 518.1C780.7 509.6 776.7 501.5 773.0 493.1C769.4 484.6 765.9 477.2 762.6 467.5C759.3 457.9 755.8 445.6 753.0 435.0C750.2 424.4 747.7 411.5 745.7 404.1C743.7 396.6 742.5 394.9 741.0 390.1C739.6 385.3 737.7 377.5 737.0 375.0Z" fill="#0d0d0d" opacity="0.97" filter="url(#b1)"/><clipPath id="k16"><path d="M731.7 305.9C734.6 311.9 744.3 332.2 749.0 342.0C753.7 351.8 756.2 357.2 760.0 365.0C763.8 372.8 768.0 381.5 771.7 389.0C775.4 396.5 778.8 403.1 782.0 410.0C785.2 416.9 788.5 423.1 791.0 430.6C793.5 438.1 795.2 446.8 797.0 455.0C798.8 463.2 800.5 472.5 802.0 480.0C803.5 487.5 804.8 493.3 806.0 500.0C807.2 506.7 807.5 510.1 809.0 520.0C810.5 529.9 813.9 553.0 814.9 559.6L735.8 571.4L729.9 531.9L727.2 513.8L723.6 495.7L718.9 472.4L715.1 455.9L709.4 443.7L699.8 424.1L688.0 399.8L676.8 376.5L659.6 340.4Z"/></clipPath><g clip-path="url(#k16)"><path d="M748.7 342.1C750.2 346.1 754.5 358.0 757.6 366.1C760.8 374.3 764.5 383.3 767.7 391.0C770.8 398.7 773.8 405.5 776.8 412.4C779.7 419.3 782.9 425.2 785.3 432.5C787.8 439.8 789.3 448.2 791.5 456.2C793.7 464.3 796.2 473.4 798.3 480.7C800.4 488.1 802.3 493.8 804.1 500.3C805.8 506.9 808.0 516.7 808.8 520.0L809.2 520.0C809.0 516.6 808.5 506.4 807.9 499.7C807.3 492.9 806.6 486.9 805.7 479.3C804.8 471.6 804.0 462.2 802.5 453.8C801.0 445.4 799.2 436.4 796.7 428.7C794.1 421.0 790.7 414.5 787.2 407.6C783.7 400.6 779.9 394.3 775.7 387.0C771.6 379.7 766.8 371.4 762.4 363.9C757.9 356.3 751.5 345.5 749.3 341.9Z" fill="#686868" opacity="0.8" filter="url(#b6)"/></g><clipPath id="k17"><path d="M731.7 305.9C734.6 311.9 744.3 332.2 749.0 342.0C753.7 351.8 756.2 357.2 760.0 365.0C763.8 372.8 768.0 381.5 771.7 389.0C775.4 396.5 778.8 403.1 782.0 410.0C785.2 416.9 788.5 423.1 791.0 430.6C793.5 438.1 795.2 446.8 797.0 455.0C798.8 463.2 800.5 472.5 802.0 480.0C803.5 487.5 804.8 493.3 806.0 500.0C807.2 506.7 807.5 510.1 809.0 520.0C810.5 529.9 813.9 553.0 814.9 559.6L894.0 547.7L888.1 508.1L884.8 486.2L880.4 464.3L875.1 437.6L866.9 405.3L854.6 376.3L843.6 353.9L832.0 330.2L821.2 307.5L803.9 271.4Z"/></clipPath><g clip-path="url(#k17)"><path d="M748.7 342.1C750.3 346.1 754.9 357.8 758.2 365.9C761.6 373.9 765.4 382.8 768.8 390.4C772.2 398.1 775.4 404.7 778.5 411.6C781.6 418.5 784.7 424.5 787.2 431.9C789.7 439.2 791.3 447.7 793.3 455.8C795.4 463.9 797.7 473.1 799.5 480.5C801.4 487.9 803.2 493.6 804.7 500.2C806.2 506.8 808.1 516.7 808.8 520.0L809.2 520.0C808.9 516.6 808.1 506.5 807.3 499.8C806.5 493.0 805.6 487.1 804.5 479.5C803.3 471.9 802.3 462.5 800.7 454.2C799.1 445.8 797.3 437.0 794.8 429.3C792.3 421.7 788.9 415.3 785.5 408.4C782.2 401.4 778.6 394.9 774.6 387.6C770.7 380.2 766.0 371.8 761.8 364.1C757.6 356.5 751.4 345.6 749.3 341.9Z" fill="#c2c2c2" opacity="0.6" filter="url(#b4)"/></g><path d="M748.8 342.1C750.6 346.0 755.7 357.4 759.4 365.3C763.0 373.2 767.1 381.9 770.7 389.5C774.3 397.0 777.6 403.6 780.8 410.6C784.0 417.5 787.2 423.6 789.8 431.0C792.3 438.5 794.0 447.1 795.9 455.2C797.8 463.4 799.6 472.7 801.3 480.1C802.9 487.6 804.3 493.4 805.6 500.1C806.9 506.7 808.3 516.7 808.9 520.0L809.0 520.0C808.5 516.7 807.2 506.7 806.0 500.0C804.8 493.3 803.5 487.5 802.0 480.0C800.5 472.5 798.8 463.2 797.0 455.0C795.2 446.8 793.5 438.1 791.0 430.6C788.5 423.1 785.2 416.9 782.0 410.0C778.8 403.1 775.4 396.5 771.7 389.0C768.0 381.5 763.8 372.8 760.0 365.0C756.2 357.2 750.8 345.8 749.0 342.0Z" fill="#5a5a5a" opacity="0.6" filter="url(#b2)"/><clipPath id="k18"><path d="M981.0 430.2C981.7 436.8 983.8 458.4 985.0 470.0C986.2 481.6 987.1 490.5 988.0 500.0C988.9 509.5 989.2 518.7 990.4 527.0C991.6 535.3 993.4 542.2 995.0 550.0C996.6 557.8 998.2 564.9 1000.0 573.7C1001.8 582.5 1004.0 593.3 1006.0 603.0C1008.0 612.7 1010.0 623.5 1011.7 631.7C1013.4 639.9 1014.8 646.0 1016.0 652.0C1017.2 658.0 1018.2 664.2 1019.0 668.0C1019.8 671.8 1018.9 667.3 1020.5 675.0C1022.1 682.7 1027.5 707.6 1028.9 714.1L950.7 730.9L942.3 691.8L940.5 683.4L937.6 667.8L933.3 647.7L927.6 618.8L921.7 590.0L916.6 566.1L911.2 538.1L908.4 507.5L905.4 478.0L901.4 438.2Z"/></clipPath><g clip-path="url(#k18)"><path d="M984.0 470.1C984.2 475.1 985.1 490.7 985.5 500.2C985.8 509.8 985.6 519.1 986.3 527.6C987.0 536.0 988.5 543.2 989.8 551.1C991.1 559.0 992.4 566.1 994.1 574.9C995.8 583.8 998.2 594.5 1000.1 604.2C1002.1 613.8 1004.1 624.7 1005.8 632.9C1007.6 641.1 1009.1 647.1 1010.6 653.1C1012.0 659.1 1013.3 665.1 1014.3 668.9C1015.3 672.7 1016.2 674.7 1016.6 675.8L1024.4 674.2C1024.3 673.0 1024.2 671.0 1023.7 667.1C1023.2 663.2 1022.5 657.0 1021.4 650.9C1020.4 644.8 1019.2 638.7 1017.6 630.5C1016.0 622.3 1013.8 611.5 1011.9 601.8C1009.9 592.1 1007.8 581.3 1005.9 572.5C1003.9 563.7 1002.1 556.6 1000.2 548.9C998.3 541.3 996.1 534.6 994.5 526.4C992.9 518.2 992.0 509.2 990.5 499.8C989.1 490.3 986.8 474.9 986.0 469.9Z" fill="#4a4a4a" opacity="0.85" filter="url(#b8)"/></g><path d="M984.7 470.0C985.1 475.0 986.8 490.5 987.2 500.1C987.7 509.6 987.4 518.8 987.4 527.3C987.4 535.8 987.0 543.2 987.1 551.2C987.2 559.3 987.5 566.7 988.2 575.8C988.9 584.8 990.1 595.8 991.2 605.7C992.4 615.5 993.8 626.6 995.0 634.8C996.2 643.1 997.3 649.3 998.3 655.4C999.4 661.6 1000.3 667.8 1001.4 671.8C1002.6 675.8 1004.5 678.1 1005.2 679.4L1020.2 674.0C1020.0 672.9 1019.6 671.3 1018.9 667.6C1018.2 664.0 1017.2 658.1 1016.0 652.1C1014.8 646.2 1013.4 640.1 1011.7 632.0C1010.1 623.8 1008.0 613.0 1006.1 603.3C1004.1 593.7 1001.9 582.9 1000.1 574.1C998.2 565.3 996.7 558.2 995.1 550.4C993.4 542.5 991.6 535.5 990.4 527.1C989.2 518.7 988.9 509.5 988.0 500.0C987.1 490.5 985.5 475.0 985.0 470.0Z" fill="#161616" opacity="0.96" filter="url(#b2)"/><clipPath id="k19"><path d="M867.1 674.4C873.8 673.8 895.7 672.0 907.0 671.0C918.3 670.0 925.8 669.3 935.0 668.6C944.2 667.9 953.7 667.5 962.0 667.0C970.3 666.5 978.0 666.0 985.0 665.6C992.0 665.2 994.2 665.1 1004.0 664.6C1013.8 664.1 1037.3 662.8 1043.9 662.5L1039.7 582.6L999.8 584.7L980.4 585.7L957.2 587.1L929.2 588.8L900.2 591.3L860.3 594.7Z"/></clipPath><g clip-path="url(#k19)"><path d="M907.0 671.5C911.7 671.5 926.0 671.7 935.2 671.6C944.4 671.5 953.9 671.3 962.2 671.0C970.6 670.7 978.3 670.3 985.2 669.6C992.2 668.9 1001.0 667.1 1004.1 666.6L1003.9 662.6C1000.7 662.4 991.8 661.5 984.8 661.6C977.7 661.7 970.1 662.3 961.8 663.0C953.4 663.7 943.9 664.4 934.8 665.6C925.6 666.9 911.6 669.7 907.0 670.5Z" fill="#c6c6c6" opacity="0.8" filter="url(#b4)"/></g><path d="M907.0 671.0C911.7 670.6 925.8 669.3 935.0 668.6C944.2 667.9 953.7 667.5 962.0 667.0C970.3 666.5 978.0 666.0 985.0 665.6C992.0 665.2 1000.8 664.8 1004.0 664.6L1004.0 664.0C1000.8 664.0 991.9 664.0 984.9 664.2C977.9 664.4 970.2 664.9 961.9 665.4C953.6 665.9 944.0 666.3 934.9 667.2C925.7 668.1 911.6 670.1 907.0 670.7Z" fill="#444" opacity="0.8" filter="url(#b1)"/><clipPath id="k20"><path d="M261.7 569.7C266.4 574.4 284.0 592.0 290.0 598.0C296.0 604.0 295.3 603.0 298.0 606.0C300.7 609.0 303.3 612.7 306.0 616.0C308.7 619.3 311.3 623.0 314.0 626.0C316.7 629.0 318.7 631.4 322.0 634.0C325.3 636.6 329.7 639.1 334.0 641.5C338.3 643.9 343.1 646.4 348.0 648.5C352.9 650.6 358.2 653.1 363.5 654.0C368.8 654.9 375.2 654.5 380.0 654.0C384.8 653.5 388.3 652.2 392.0 651.0C395.7 649.8 394.1 650.1 402.0 647.0C409.9 643.9 432.9 634.6 439.1 632.1L409.4 557.9L372.3 572.7L367.7 574.8L371.6 574.4L377.1 575.2L379.2 574.8L373.0 571.6L371.0 570.8L373.8 572.9L368.5 566.0L357.8 552.9L346.6 541.4L318.3 513.1Z"/></clipPath><g clip-path="url(#k20)"><path d="M289.3 598.7C290.4 600.3 294.0 604.3 295.8 608.0C297.5 611.7 298.3 616.6 299.8 621.0C301.2 625.4 302.2 630.4 304.3 634.6C306.4 638.9 308.6 643.0 312.2 646.6C315.8 650.3 320.8 653.6 325.7 656.3C330.6 659.1 335.8 661.5 341.8 663.2C347.7 665.0 354.8 667.0 361.3 666.8C367.8 666.6 375.5 664.0 380.8 662.0C386.2 660.0 389.6 657.1 393.2 654.8C396.8 652.5 400.8 649.1 402.4 647.9L401.6 646.1C399.8 646.3 394.5 647.2 390.8 647.2C387.0 647.2 383.3 647.0 379.2 646.0C375.0 645.0 369.9 643.2 365.7 641.2C361.5 639.1 358.1 636.2 354.2 633.8C350.3 631.3 346.0 628.7 342.3 626.7C338.5 624.6 334.9 622.9 331.8 621.4C328.7 619.8 327.0 619.1 323.7 617.4C320.5 615.6 316.2 613.2 312.2 611.0C308.3 608.8 303.8 606.3 300.2 604.0C296.7 601.7 292.3 598.4 290.7 597.3Z" fill="#4c4c4c" opacity="0.88" filter="url(#b12)"/></g><clipPath id="k21"><path d="M261.7 569.7C266.4 574.4 284.0 592.0 290.0 598.0C296.0 604.0 295.3 603.0 298.0 606.0C300.7 609.0 303.3 612.7 306.0 616.0C308.7 619.3 311.3 623.0 314.0 626.0C316.7 629.0 318.7 631.4 322.0 634.0C325.3 636.6 329.7 639.1 334.0 641.5C338.3 643.9 343.1 646.4 348.0 648.5C352.9 650.6 358.2 653.1 363.5 654.0C368.8 654.9 375.2 654.5 380.0 654.0C384.8 653.5 388.3 652.2 392.0 651.0C395.7 649.8 394.1 650.1 402.0 647.0C409.9 643.9 432.9 634.6 439.1 632.1L468.9 706.4L431.7 721.3L416.3 727.2L388.4 733.6L349.9 732.8L316.8 722.2L295.0 711.4L273.0 697.2L254.2 679.1L243.5 666.0L238.2 659.1L233.4 654.6L205.1 626.3Z"/></clipPath><g clip-path="url(#k21)"><path d="M289.6 598.4C290.8 599.8 294.4 603.9 296.6 607.2C298.9 610.5 301.0 614.5 303.2 618.2C305.4 622.0 307.6 626.0 310.0 629.6C312.4 633.2 314.2 636.5 317.6 639.7C320.9 642.8 325.5 645.9 330.1 648.5C334.7 651.1 339.6 653.5 345.0 655.5C350.4 657.5 356.5 659.8 362.4 660.3C368.3 660.8 375.4 659.6 380.5 658.4C385.5 657.1 388.9 654.6 392.6 652.8C396.2 650.9 400.6 648.3 402.2 647.5L401.8 646.5C400.1 647.0 395.2 648.7 391.4 649.2C387.7 649.8 384.0 649.9 379.5 649.6C375.1 649.4 369.3 649.0 364.6 647.7C359.8 646.3 355.4 643.7 351.0 641.5C346.5 639.3 342.0 636.7 337.9 634.5C333.8 632.3 329.7 630.3 326.4 628.3C323.1 626.3 321.0 624.8 318.0 622.4C315.1 620.0 311.9 616.7 308.8 613.8C305.7 610.8 302.5 607.5 299.4 604.8C296.3 602.1 291.9 598.8 290.4 597.6Z" fill="#bebebe" opacity="0.75" filter="url(#b4)"/></g><path d="M290.0 598.0C291.3 599.3 295.3 603.0 298.0 606.0C300.7 609.0 303.3 612.7 306.0 616.0C308.7 619.3 311.3 623.0 314.0 626.0C316.7 629.0 318.7 631.5 322.1 634.0C325.4 636.6 329.7 639.1 334.0 641.5C338.4 643.9 343.1 646.4 348.0 648.5C352.9 650.6 358.1 653.1 363.4 654.0C368.8 654.9 375.2 654.5 380.0 654.0C384.7 653.5 388.3 652.2 392.0 651.0C395.7 649.8 400.3 647.7 402.0 647.0L401.9 646.7C400.2 647.3 395.4 649.3 391.8 650.2C388.1 651.1 384.4 652.0 379.8 652.1C375.2 652.2 369.2 652.0 364.1 650.7C359.1 649.5 354.3 646.8 349.6 644.7C344.9 642.6 340.2 640.2 335.9 638.0C331.6 635.8 327.2 633.8 323.8 631.6C320.3 629.4 318.1 627.5 315.2 624.8C312.4 622.1 309.5 618.6 306.7 615.4C303.9 612.2 301.1 608.6 298.3 605.7C295.6 602.8 291.5 599.2 290.1 597.9Z" fill="#2c2c2c" opacity="0.85" filter="url(#b1)"/><path d="M262.0 470.0C261.7 478.3 260.7 503.3 260.0 520.0C259.3 536.7 258.6 554.2 258.0 570.0C257.4 585.8 256.8 601.7 256.5 615.0C256.2 628.3 256.1 644.2 256.0 650.0" fill="none" stroke="#a0a0a0" stroke-width="4" stroke-linecap="round" stroke-linejoin="round" opacity="0.5" filter="url(#b6)"/><path d="M150 703C190 692 230 681 272 673S320 664 345 660" fill="none" stroke="#c4c4c4" stroke-width="5" stroke-linecap="round" stroke-linejoin="round" opacity="0.85" filter="url(#b3)"/><path d="M204 706C225 699 245 693 286 683" fill="none" stroke="#8c8c8c" stroke-width="5" stroke-linecap="round" stroke-linejoin="round" opacity="0.8" filter="url(#b4)"/><path d="M225 676L238 656L284 665L341 659" fill="none" stroke="#c2c2c2" stroke-width="3" stroke-linecap="round" stroke-linejoin="round" opacity="0.7" filter="url(#b2)"/><path d="M240 657C270 659 310 660 346 657" fill="none" stroke="#8e8e8e" stroke-width="2.4" stroke-linecap="round" stroke-linejoin="round" opacity="0.7" filter="url(#b2)"/><ellipse cx="297" cy="685" rx="14" ry="4" fill="#6c6c6c" opacity="0.8" filter="url(#b4)" transform="rotate(-14 297 685)"/><ellipse cx="251" cy="699" rx="13" ry="3" fill="#7e7e7e" opacity="0.75" filter="url(#b4)" transform="rotate(-16 251 699)"/><ellipse cx="339" cy="703" rx="16" ry="3" fill="#787878" opacity="0.75" filter="url(#b4)" transform="rotate(-3 339 703)"/><ellipse cx="365" cy="680" rx="13" ry="3.4" fill="#868686" opacity="0.75" filter="url(#b4)" transform="rotate(10 365 680)"/><ellipse cx="386" cy="694" rx="14" ry="3.4" fill="#757575" opacity="0.75" filter="url(#b4)" transform="rotate(-8 386 694)"/><ellipse cx="322" cy="676" rx="15" ry="3.4" fill="#c4c4c4" opacity="0.8" filter="url(#b4)" transform="rotate(-12 322 676)"/><ellipse cx="348" cy="667" rx="14" ry="3" fill="#c0c0c0" opacity="0.75" filter="url(#b4)" transform="rotate(-6 348 667)"/><ellipse cx="366" cy="696" rx="10" ry="2.6" fill="#c2c2c2" opacity="0.7" filter="url(#b3)" transform="rotate(-4 366 696)"/><ellipse cx="428" cy="689" rx="18" ry="3.4" fill="#c0c0c0" opacity="0.75" filter="url(#b4)" transform="rotate(-6 428 689)"/><ellipse cx="410" cy="676" rx="15" ry="3.4" fill="#8e8e8e" opacity="0.65" filter="url(#b4)" transform="rotate(8 410 676)"/><ellipse cx="445" cy="700" rx="15" ry="3.4" fill="#8c8c8c" opacity="0.65" filter="url(#b4)"/><path d="M300 706C330 699 360 705 400 702S440 706 465 703" fill="none" stroke="#9a9a9a" stroke-width="3" stroke-linecap="round" stroke-linejoin="round" opacity="0.7" filter="url(#b3)"/><path d="M470 690C520 680 580 684 640 694" fill="none" stroke="#a0a0a0" stroke-width="5" stroke-linecap="round" stroke-linejoin="round" opacity="0.6" filter="url(#b6)"/><ellipse cx="668" cy="688" rx="8" ry="12" fill="#7a7a7a" opacity="0.85" filter="url(#b4)" transform="rotate(20 668 688)"/><ellipse cx="684" cy="700" rx="8" ry="6" fill="#c4c4c4" opacity="0.85" filter="url(#b3)"/><path d="M642 664L655 660L660 700L646 706Z" fill="#8a8a8a" opacity="0.8" filter="url(#b3)"/><path d="M655 650L672 690L700 705L740 708L720 690L690 672Z" fill="#bdbdbd" opacity="0.7" filter="url(#b3)"/><path d="M656 652C662 668 668 684 676 702" fill="none" stroke="#5a5a5a" stroke-width="2" stroke-linecap="round" stroke-linejoin="round" opacity="0.8" filter="url(#b2)"/><path d="M716 648L760 668L790 700L770 706L740 690Z" fill="#a2a2a2" opacity="0.8" filter="url(#b4)"/><path d="M716 648L762 668L792 700" fill="none" stroke="#c4c4c4" stroke-width="2.4" stroke-linecap="round" stroke-linejoin="round" opacity="0.7" filter="url(#b2)"/><path d="M971 681L1005 686L1043 695L1046 699L1036 702L1000 698L975 690Z" fill="#161616" opacity="0.95" filter="url(#b2)"/><path d="M928 690.5L941 688.6L945 693L932 695.4Z" fill="#1c1c1c" opacity="0.9" filter="url(#b2)"/><path d="M841 699L851 692.6L858 705L846 709.5Z" fill="#1a1a1a" opacity="0.92" filter="url(#b2)"/><path d="M782 697L794 705L792 712L782 712Z" fill="#1a1a1a" opacity="0.88" filter="url(#b2)"/><path d="M1060 704L1078 700L1082 706L1062 710.5Z" fill="#202020" opacity="0.88" filter="url(#b2)"/><path d="M800 690C840 684 880 684 930 686S1000 694 1050 704" fill="none" stroke="#8c8c8c" stroke-width="5" stroke-linecap="round" stroke-linejoin="round" opacity="0.6" filter="url(#b4)"/><path d="M880 676C930 674 980 672 1020 672" fill="none" stroke="#c2c2c2" stroke-width="4" stroke-linecap="round" stroke-linejoin="round" opacity="0.75" filter="url(#b3)"/><path d="M1030 684L1070 696L1098 710" fill="none" stroke="#c2c2c2" stroke-width="4" stroke-linecap="round" stroke-linejoin="round" opacity="0.75" filter="url(#b3)"/><path d="M860 700C900 696 940 700 960 702" fill="none" stroke="#bebebe" stroke-width="4" stroke-linecap="round" stroke-linejoin="round" opacity="0.7" filter="url(#b3)"/></g><path d="M596.3 211.8C594.9 212.1 590.5 212.6 588.0 213.5C585.5 214.4 583.3 215.2 581.0 217.0C578.7 218.8 576.2 221.5 574.0 224.0C571.8 226.5 571.5 228.4 567.6 232.0C563.7 235.6 556.3 240.5 550.7 245.6C545.1 250.7 539.4 257.1 533.8 262.5C528.2 267.9 522.5 272.8 516.9 277.7C511.3 282.6 507.9 285.0 500.0 292.0C492.1 299.0 479.6 311.1 469.6 319.7C459.6 328.3 451.6 334.4 440.0 343.5C428.4 352.6 412.8 365.1 400.0 374.0C387.2 382.9 375.7 390.1 363.5 397.0C351.3 403.9 339.1 409.8 327.0 415.5C314.9 421.2 301.3 426.8 291.0 431.5C280.7 436.2 271.8 439.9 265.0 443.5C258.2 447.1 253.7 449.6 250.0 453.0C246.3 456.4 245.2 459.8 243.0 464.0C240.8 468.2 238.8 473.3 237.0 478.0C235.2 482.7 233.7 486.3 232.0 492.0C230.3 497.7 228.5 505.3 227.0 512.0C225.5 518.7 224.4 525.0 223.0 532.0C221.6 539.0 220.0 546.7 218.5 554.0C217.0 561.3 215.7 568.7 214.0 576.0C212.3 583.3 210.3 590.8 208.5 598.0C206.7 605.2 204.6 612.7 203.0 619.0C201.4 625.3 200.2 630.5 199.0 636.0C197.8 641.5 196.8 646.7 195.5 652.0C194.2 657.3 192.2 665.3 191.5 668.0L198.0 679.6L192.0 681.0L168.6 689.0L146.0 700.6L146.0 708.0L204.0 708.6L249.0 705.7L253.6 709.0L329.0 705.7L334.0 710.5L364.6 711.0L404.8 707.0L412.0 711.6L465.0 710.0L625.0 710.6L785.0 710.2L792.0 709.0L841.7 709.3L844.0 703.4L860.6 710.5L955.0 705.7L962.0 708.0L1054.0 712.8L1061.0 709.0L1080.0 707.0L1101.5 715.0L1101.5 707.0L1068.4 690.4L1045.0 682.0L1021.0 676.0C1021.1 673.7 1020.8 666.8 1021.5 662.0C1022.2 657.2 1023.2 651.1 1025.0 647.0C1026.8 642.9 1029.7 640.4 1032.0 637.5C1034.3 634.6 1037.2 631.6 1039.0 629.5C1040.8 627.4 1042.1 627.1 1042.6 625.0C1043.1 622.9 1042.4 620.5 1042.0 617.0C1041.6 613.5 1041.1 608.5 1040.0 604.0C1038.9 599.5 1036.6 594.7 1035.4 590.0C1034.2 585.3 1034.3 581.1 1033.0 575.6C1031.7 570.1 1029.3 563.1 1027.5 557.0C1025.7 550.9 1023.8 545.3 1022.0 539.0C1020.2 532.7 1018.3 525.7 1016.5 519.0C1014.7 512.3 1012.8 505.5 1011.0 499.0C1009.2 492.5 1007.7 486.2 1006.0 480.0C1004.3 473.8 1002.9 466.7 1001.0 462.0C999.1 457.3 997.5 454.8 994.5 452.0C991.5 449.2 989.9 447.8 983.0 445.0C976.1 442.2 964.2 439.4 953.0 435.5C941.8 431.6 928.2 426.2 916.0 421.5C903.8 416.8 892.1 412.1 880.0 407.0C867.9 401.9 855.2 396.5 843.5 390.6C831.8 384.7 820.2 377.6 809.6 371.5C799.0 365.4 789.9 360.5 780.0 353.7C770.1 346.9 757.8 336.9 750.4 330.5C743.0 324.1 740.2 320.9 735.6 315.3C731.0 309.7 726.4 301.9 723.0 297.0C719.6 292.1 717.5 289.1 715.0 285.7C712.5 282.3 710.5 279.2 708.0 276.5C705.5 273.8 703.0 272.2 700.0 269.5C697.0 266.8 693.3 263.1 690.0 260.5C686.7 257.9 683.5 255.9 680.0 254.0C676.5 252.1 673.7 251.1 669.0 249.0C664.3 246.9 657.7 244.1 652.0 241.4C646.3 238.7 640.1 235.7 635.0 233.0C629.9 230.3 625.8 228.1 621.6 225.3C617.4 222.5 612.9 218.1 609.8 216.0C606.7 213.9 605.2 213.5 603.0 212.8C600.8 212.1 597.4 212.0 596.3 211.8Z" fill="none" stroke="#7a7a7a" stroke-width="0.9" opacity="0.55"/></svg>
</div>
<span class="t" style="left:16.5px;top:165.6px;font-size:8.05px;color:#e2e2e2">[+] [Render_Camera ]&nbsp; [Standard ]&nbsp; [Default Shading ]</span>
<span class="t" style="left:589px;top:551.5px;font-size:7.9px;color:#f2f2f2;text-shadow:0.6px 0.6px 0.5px #222">Sphere_Light</span>
<svg class="a" style="left:18px;top:740px" width="20" height="22" viewBox="0 0 20 22"><path d="M6 4.5L8 4.5L6 8L8 8" fill="none" stroke="#3a3a7a" stroke-width="0.9"/><path d="M5.4 13L6.8 16L8.2 13M6.8 16V18" fill="none" stroke="#5a5a2a" stroke-width="0.9"/><path d="M9 18H11.4" stroke="#555" stroke-width="0.8"/><path d="M12.4 14L15.4 18M15.4 14L12.4 18" stroke="#7a2a3a" stroke-width="0.9"/></svg>

<div class="a" id="ltb"></div>
<svg class="a" style="left:0;top:130px" width="16" height="640" viewBox="0 130 16 640"><ellipse cx="1" cy="147" rx="6.4" ry="5.4" fill="#dfe6ee"/><path d="M5 145L9 141L9.8 142L7 148Z" fill="#cfd8e4"/><ellipse cx="0" cy="149.4" rx="5.6" ry="2.6" fill="#8a98ac"/><polygon points="12.6,158.6 12.6,156 10,158.6" fill="#ccc"/><path d="M-2 166.4C1 164.6 4.4 166 4.8 169C8 169 9.6 171.4 8.4 174H-2" fill="none" stroke="#dcdcdc" stroke-width="1.4"/><rect x="-2" y="185" width="11.6" height="13.6" fill="#e8d0d0" stroke="#dcdcdc" stroke-width="1.4"/><path d="M0 193C2 190 5 195 8 191.4" stroke="#c04030" stroke-width="2" fill="none"/><path d="M-1 217A5 5 0 0 1 8 217Z" fill="#f0d44a"/><rect x="-1" y="218.4" width="10" height="2" fill="#c8c8c8"/><rect x="-1" y="221.8" width="10" height="2" fill="#a8a8a8"/><rect x="0" y="230.4" width="15" height="1" fill="#3a3a3a"/><path d="M0 243H4M2 246H7M7 242V250L10 248V244Z" stroke="#a0a0a0" stroke-width="1.3" fill="#8a8a8a"/><circle cx="1.6" cy="246.4" r="1.6" fill="none" stroke="#b8b8b8" stroke-width="1"/><rect x="0" y="258.6" width="15" height="1" fill="#3a3a3a"/><rect x="-2" y="265.6" width="11" height="11.4" fill="#f3ecb4" stroke="#dcd6a0" stroke-width="1"/><path d="M-2 305.6V298C0 290.6 9 292 10 305.6Z" fill="#f3ecb4"/><circle cx="1.6" cy="322" r="8.2" fill="#e6e0b4"/><circle cx="1" cy="321.4" r="5.4" fill="#f6f2d2"/><path d="M-2 341H6L9 339.4L7 345C7 349 4 350.4 -2 350.4Z" fill="#9a9a9a"/><path d="M-2 341H6" stroke="#c8c8c8" stroke-width="1"/><path d="M-2 358L2 358L9 370C6 372 1 372 -2 371.6Z" fill="#b4b4b4"/><path d="M-2 358L2 358L5.6 364H-2Z" fill="#d0d0d0"/><circle cx="1.4" cy="387.6" r="5.4" fill="#f7c81e"/><path d="M1.4 379V396.4M-7 387.6H10M-4.6 381.6L7.4 393.6M7.4 381.6L-4.6 393.6" stroke="#f7c81e" stroke-width="1.6"/><circle cx="0.6" cy="409.8" r="8" fill="#ded6a0"/><circle cx="0" cy="409.4" r="5.2" fill="#efe8bc"/><polygon points="-1,433.6 2,432.5 2,435.5 -1,436.6" fill="#6a9ade"/><polygon points="-1,440.40000000000003 2,439.3 2,442.3 -1,443.40000000000003" fill="#6a9ade"/><polygon points="2,435.9 5,434.79999999999995 5,437.79999999999995 2,438.9" fill="#6a9ade"/><polygon points="5,431.40000000000003 8,430.3 8,433.3 5,434.40000000000003" fill="#6a9ade"/><polygon points="5,438.20000000000005 8,437.1 8,440.1 5,441.20000000000005" fill="#6a9ade"/><polygon points="8,433.7 11,432.59999999999997 11,435.59999999999997 8,436.7" fill="#6a9ade"/><path d="M-1 463L4 458" stroke="#9ab4d8" stroke-width="2.2"/><circle cx="6" cy="456.4" r="3.8" fill="#c8382c"/><circle cx="5" cy="455.4" r="1.4" fill="#e88a7a"/><path d="M-2 488.6L3 476L9 487.6Z M-2 481L9 487.6M9 481L-2 488.6" fill="none" stroke="#d4d8e0" stroke-width="1"/><circle cx="1" cy="504.4" r="5.2" fill="#4e86d2"/><circle cx="1" cy="504.4" r="6.4" fill="none" stroke="#6a9ade" stroke-width="2.4" stroke-dasharray="2 1.6"/><circle cx="1" cy="504.4" r="2" fill="#b8cdea"/><path d="M-1 535C0 528 1 523 3 520M2 535C3 529 5 525 8 522M-2 535C-2 529 -3 524 -1 521M4 535C6 530 8 529 10 527" stroke="#8ab82a" stroke-width="1.5" fill="none"/><rect x="0" y="539.6" width="15" height="1" fill="#3a3a3a"/><circle cx="1.6" cy="554.6" r="7.6" fill="#9db6d4"/><circle cx="0" cy="552.4" r="3.6" fill="#d2e0f0"/><polygon points="12.6,565.6 12.6,563 10,565.6" fill="#ccc"/><circle cx="5.6" cy="573.6" r="3" fill="#f4e08a"/><circle cx="5.6" cy="581" r="3.2" fill="#f2c41c"/><circle cx="-0.4" cy="577" r="2.6" fill="#d04838"/><rect x="-2" y="591.6" width="11.4" height="16" fill="#1a1a1a" stroke="#b04a3a" stroke-width="1"/><circle cx="1" cy="601.6" r="4.6" fill="#2a80e8"/><rect x="4" y="598" width="5" height="9" fill="#080808"/><rect x="0" y="612.4" width="15" height="1" fill="#3a3a3a"/><rect x="0.4" y="620.6" width="3" height="13.4" fill="#c9c9d2"/><rect x="5" y="628.6" width="4" height="5.4" fill="#b8b8c4"/><rect x="-2" y="627" width="3" height="7" fill="#c04a4a"/><circle cx="1.6" cy="649.8" r="7" fill="none" stroke="#6e6e6e" stroke-width="1.2"/><text x="-1" y="653.6" font-family="Liberation Sans" font-size="10" fill="#6e6e6e">?</text></svg>

<div class="a" id="rp"><div class="a" style="left:0;top:0;width:1px;height:605px;background:#5c5c54"></div><div class="a" style="left:5.5px;top:1.3px;width:117px;height:0;border-top:1px dotted #b5b5b5"></div><svg class="a" style="left:0;top:0" width="122" height="50" viewBox="1233 163 122 50"><path d="M1247.9 172.6V184M1241.8 178.3H1254" stroke="#e3e3e3" stroke-width="2.6"/><rect x="1262.6" y="171.6" width="18" height="15" fill="#3c3c3c"/><rect x="1265.6" y="174.4" width="11.6" height="10" fill="none" stroke="#3f8585" stroke-width="1.3"/><path d="M1265.6 184.4C1266.6 178.6 1271.6 175 1277.2 174.4" fill="none" stroke="#3f8585" stroke-width="1.3"/><rect x="1264.6" y="173.4" width="2.2" height="2.2" fill="#3f8585"/><rect x="1276" y="173.4" width="2.2" height="2.2" fill="#3f8585"/><rect x="1264.6" y="183.2" width="2.2" height="2.2" fill="#3f8585"/><rect x="1276" y="183.2" width="2.2" height="2.2" fill="#3f8585"/><rect x="1290" y="173.4" width="8.6" height="3.4" fill="#7e8c8c"/><path d="M1294.3 177V179.4M1290.6 182V179.6H1298V182" fill="none" stroke="#4b9292" stroke-width="1.2"/><rect x="1288.8" y="181.6" width="3.8" height="3.4" fill="#4b9292"/><rect x="1295.8" y="181.6" width="3.8" height="3.4" fill="#4b9292"/><circle cx="1313.6" cy="178.8" r="4" fill="none" stroke="#5a6e86" stroke-width="1.2"/><circle cx="1315.6" cy="178.8" r="4.4" fill="#6e7686"/><circle cx="1318.6" cy="178.8" r="5" fill="#9498a2"/><rect x="1334" y="173.6" width="12.2" height="7.8" fill="#8b8b8b"/><rect x="1338.6" y="181.4" width="3" height="1.6" fill="#8b8b8b"/><path d="M1336.4 184.6L1340.1 182.6L1343.8 184.6Z" fill="#a0a0a0"/><rect x="1239" y="191" width="15.8" height="15.6" rx="2" fill="#5b84c4"/><circle cx="1246.9" cy="198.8" r="4.6" fill="#d8dae6"/><circle cx="1246.6" cy="198.4" r="2.2" fill="#e6d8d4"/><circle cx="1262" cy="197.4" r="3.4" fill="none" stroke="#e3e3e3" stroke-width="1.6"/><rect x="1262" y="197.6" width="5.2" height="5.4" fill="#e3e3e3"/><circle cx="1262" cy="197.4" r="1.6" fill="#c6a6a6"/><circle cx="1278.3" cy="197" r="3.8" fill="#e3e3e3"/><rect x="1276.4" y="199.6" width="3.8" height="2.6" fill="#e3e3e3"/><rect x="1276.8" y="203" width="3" height="1" fill="#bdbdbd"/><rect x="1288.8" y="195" width="7.4" height="7" rx="0.8" fill="#e3e3e3"/><polygon points="1296.6,198.4 1299.6,195.6 1299.6,201.6" fill="#e3e3e3"/><path d="M1305.6 194.2V202.8H1314.2Z" fill="none" stroke="#e3e3e3" stroke-width="1.5"/><path d="M1320.8 196.4C1322.6 194.4 1324.4 194.4 1326 195.79999999999998S1329.4 197.0 1331 194.79999999999998" fill="none" stroke="#e3e3e3" stroke-width="1.2"/><path d="M1320.8 199.4C1322.6 197.4 1324.4 197.4 1326 198.79999999999998S1329.4 200.0 1331 197.79999999999998" fill="none" stroke="#e3e3e3" stroke-width="1.2"/><path d="M1320.8 202.4C1322.6 200.4 1324.4 200.4 1326 201.79999999999998S1329.4 203.0 1331 200.79999999999998" fill="none" stroke="#e3e3e3" stroke-width="1.2"/><circle cx="1339.4" cy="195.6" r="1.6" fill="none" stroke="#e3e3e3" stroke-width="1.2"/><circle cx="1343.6" cy="200.4" r="2.2" fill="none" stroke="#e3e3e3" stroke-width="1.7" stroke-dasharray="1.1 0.9"/><circle cx="1343.6" cy="200.4" r="1.4" fill="none" stroke="#e3e3e3" stroke-width="1"/></svg><div class="a" style="left:5.7px;top:47.5px;width:117px;height:14.5px;background:#5c5c5c"></div><span class="t" style="left:9.6px;top:51px;font-size:7.6px;color:#e4e4e4">Standard Primitives</span><div class="a" style="left:5.7px;top:65.5px;width:117px;height:114.5px;background:#525252"></div><div class="a" style="left:10.6px;top:71px;border:2.4px solid transparent;border-top:3.4px solid #c8c8c8;border-bottom:0"></div><span class="t" style="left:20px;top:69px;font-size:7.9px;font-weight:bold;color:#f0f0f0">Object Type</span><div class="a" style="left:119px;top:73px;width:3px;height:1px;background:#aaa"></div><span class="t" style="left:43.5px;top:83.4px;font-size:7.3px;color:#767676">AutoGrid</span><div class="a" style="left:36.5px;top:84px;width:5px;height:5px;background:#505050"></div><div class="btn" style="left:14.6px;top:94.2px;width:49.4px">Box</div><div class="btn" style="left:71px;top:94.2px;width:51px">Cone</div><div class="btn" style="left:14.6px;top:108.8px;width:49.4px">Sphere</div><div class="btn" style="left:71px;top:108.8px;width:51px">GeoSphere</div><div class="btn" style="left:14.6px;top:123.3px;width:49.4px">Cylinder</div><div class="btn" style="left:71px;top:123.3px;width:51px">Tube</div><div class="btn" style="left:14.6px;top:137.9px;width:49.4px">Torus</div><div class="btn" style="left:71px;top:137.9px;width:51px">Pyramid</div><div class="btn" style="left:14.6px;top:152.4px;width:49.4px">Teapot</div><div class="btn" style="left:71px;top:152.4px;width:51px">Plane</div><div class="btn" style="left:14.6px;top:166.9px;width:49.4px">TextPlus</div><div class="a" style="left:5.7px;top:183.5px;width:117px;height:39.5px;background:#525252"></div><div class="a" style="left:10.6px;top:189px;border:2.4px solid transparent;border-top:3.4px solid #c8c8c8;border-bottom:0"></div><span class="t" style="left:20px;top:187.2px;font-size:7.8px;font-weight:bold;color:#f0f0f0">Name and Color</span><div class="a" style="left:119px;top:191px;width:3px;height:1px;background:#aaa"></div><div class="a" style="left:13px;top:203px;width:94px;height:13px;background:#565656"></div><div class="a" style="left:110.4px;top:203px;width:12px;height:13.4px;background:#df3587"></div></div>

<div class="a" id="tl"><svg class="a" style="left:0;top:0" width="1355" height="21" viewBox="0 769 1355 21"><path d="M61.8 770V782M74.5 770V781M87.1 770V781M99.8 770V781M112.4 770V781M125.1 770V782M137.8 770V781M150.4 770V781M163.1 770V781M175.7 770V781M188.4 770V782M201.1 770V781M213.7 770V781M226.4 770V781M239.0 770V781M251.7 770V782M264.4 770V781M277.0 770V781M289.7 770V781M302.3 770V781M315.0 770V782M327.7 770V781M340.3 770V781M353.0 770V781M365.6 770V781M378.3 770V782M391.0 770V781M403.6 770V781M416.3 770V781M428.9 770V781M441.6 770V782M454.3 770V781M466.9 770V781M479.6 770V781M492.2 770V781M504.9 770V782M517.6 770V781M530.2 770V781M542.9 770V781M555.5 770V781M568.2 770V782M580.9 770V781M593.5 770V781M606.2 770V781M618.8 770V781M631.5 770V782M644.2 770V781M656.8 770V781M669.5 770V781M682.1 770V781M694.8 770V782M707.5 770V781M720.1 770V781M732.8 770V781M745.4 770V781M758.1 770V782M770.8 770V781M783.4 770V781M796.1 770V781M808.7 770V781M821.4 770V782M834.1 770V781M846.7 770V781M859.4 770V781M872.0 770V781M884.7 770V782M897.4 770V781M910.0 770V781M922.7 770V781M935.3 770V781M948.0 770V782M960.7 770V781M973.3 770V781M986.0 770V781M998.6 770V781M1011.3 770V782M1024.0 770V781M1036.6 770V781M1049.3 770V781M1061.9 770V781M1074.6 770V782M1087.3 770V781M1099.9 770V781M1112.6 770V781M1125.2 770V781M1137.9 770V782M1150.6 770V781M1163.2 770V781M1175.9 770V781M1188.5 770V781M1201.2 770V782M1213.9 770V781M1226.5 770V781M1239.2 770V781M1251.8 770V781M1264.5 770V782M1277.2 770V781M1289.8 770V781M1302.5 770V781M1315.1 770V781M1327.8 770V782" stroke="#454545" stroke-width="1"/></svg><span class="t" style="left:115.1px;top:12.4px;width:20px;text-align:center;font-size:7.4px;color:#c4c4c4">5</span><span class="t" style="left:178.4px;top:12.4px;width:20px;text-align:center;font-size:7.4px;color:#c4c4c4">10</span><span class="t" style="left:241.7px;top:12.4px;width:20px;text-align:center;font-size:7.4px;color:#c4c4c4">15</span><span class="t" style="left:305.0px;top:12.4px;width:20px;text-align:center;font-size:7.4px;color:#c4c4c4">20</span><span class="t" style="left:368.3px;top:12.4px;width:20px;text-align:center;font-size:7.4px;color:#c4c4c4">25</span><span class="t" style="left:431.6px;top:12.4px;width:20px;text-align:center;font-size:7.4px;color:#c4c4c4">30</span><span class="t" style="left:494.9px;top:12.4px;width:20px;text-align:center;font-size:7.4px;color:#c4c4c4">35</span><span class="t" style="left:558.2px;top:12.4px;width:20px;text-align:center;font-size:7.4px;color:#c4c4c4">40</span><span class="t" style="left:621.5px;top:12.4px;width:20px;text-align:center;font-size:7.4px;color:#c4c4c4">45</span><span class="t" style="left:684.8px;top:12.4px;width:20px;text-align:center;font-size:7.4px;color:#c4c4c4">50</span><span class="t" style="left:748.1px;top:12.4px;width:20px;text-align:center;font-size:7.4px;color:#c4c4c4">55</span><span class="t" style="left:811.4px;top:12.4px;width:20px;text-align:center;font-size:7.4px;color:#c4c4c4">60</span><span class="t" style="left:874.7px;top:12.4px;width:20px;text-align:center;font-size:7.4px;color:#c4c4c4">65</span><span class="t" style="left:938.0px;top:12.4px;width:20px;text-align:center;font-size:7.4px;color:#c4c4c4">70</span><span class="t" style="left:1001.3px;top:12.4px;width:20px;text-align:center;font-size:7.4px;color:#c4c4c4">75</span><span class="t" style="left:1064.6px;top:12.4px;width:20px;text-align:center;font-size:7.4px;color:#c4c4c4">80</span><span class="t" style="left:1127.9px;top:12.4px;width:20px;text-align:center;font-size:7.4px;color:#c4c4c4">85</span><span class="t" style="left:1191.2px;top:12.4px;width:20px;text-align:center;font-size:7.4px;color:#c4c4c4">90</span><span class="t" style="left:1254.5px;top:12.4px;width:20px;text-align:center;font-size:7.4px;color:#c4c4c4">95</span><span class="t" style="left:1317.8px;top:12.4px;width:20px;text-align:center;font-size:7.4px;color:#c4c4c4">100</span><div class="a" style="left:0;top:0;width:62px;height:21px;background:#4a4a4a"></div><div class="a" style="left:16px;top:2px;width:0;height:17px;border-left:1px dotted #aaa"></div><span class="t" style="left:29px;top:8px;font-size:8px;color:#9fb0c0;font-weight:bold">|/\</span></div>
<div class="a" id="sb"><div class="a" style="left:0;top:1.5px;width:63px;height:19px;background:#f0dede"></div><div class="a" style="left:0;top:20.5px;width:63px;height:15.5px;background:#fbfbfb"></div><span class="t" style="left:-1.5px;top:19.6px;font-family:'Liberation Mono',monospace;font-size:8.8px;color:#a8a8a8">AXScript Min</span><span class="t" style="left:66px;top:7.6px;font-size:7.6px;color:#e6e6e6">None Selected</span><span class="t" style="left:66px;top:25px;font-size:7.6px;color:#e6e6e6">Rendering Time&nbsp; 0:00:10</span><div class="a" style="left:738px;top:6px;width:7px;height:8px;background:#4e4e4e"></div><div class="a" style="left:756px;top:8px;width:7px;height:7px;background:#505050"></div><svg class="a" style="left:774.6px;top:5.6px" width="10" height="10" viewBox="0 0 10 10"><rect x="0.6" y="0.6" width="8.8" height="8.8" fill="none" stroke="#f0f0f0" stroke-width="1.2"/><circle cx="5" cy="5" r="2.1" fill="none" stroke="#f0f0f0" stroke-width="1.1"/><path d="M5 1.4V3M5 7V8.6" stroke="#f0f0f0" stroke-width="1"/></svg><span class="t" style="left:790.6px;top:7.4px;font-size:7.4px;color:#dcdcdc">X:</span><div class="fld" style="left:799px;top:4px;width:42px;font-size:7.2px">-16,105cm</div><span class="t" style="left:851px;top:7.4px;font-size:7.4px;color:#dcdcdc">Y:</span><div class="fld" style="left:860px;top:4px;width:41.5px;font-size:7.2px">-479,906cm</div><span class="t" style="left:911px;top:7.4px;font-size:7.4px;color:#dcdcdc">Z:</span><div class="fld" style="left:920px;top:4px;width:42px;font-size:7.2px">0,0cm</div><span class="t" style="left:972px;top:7.4px;font-size:7.6px;color:#e2e2e2">Grid = 10,0cm</span><div class="a" style="left:952px;top:22px;width:94px;height:14px;background:#3d3d3d"></div><svg class="a" style="left:956.4px;top:23.4px" width="11" height="11" viewBox="0 0 11 11"><path d="M5.5 1L9.6 3.2V7.6L5.5 10L1.4 7.6V3.2ZM1.4 3.2L5.5 5.4L9.6 3.2M5.5 5.4V10" fill="none" stroke="#d0d0d0" stroke-width="0.9"/></svg><span class="t" style="left:972.8px;top:25.2px;font-size:7.8px;color:#e2e2e2">Add Time Tag</span><svg class="a" style="left:1048px;top:4px" width="95" height="32" viewBox="1048 794 95 32"><g fill="#dcdcdc"><rect x="1052" y="796.4" width="1.6" height="8.4"/><polygon points="1060,796.4 1060,804.8 1054,800.6"/><rect x="1070" y="796.4" width="1.4" height="8.4"/><rect x="1072.6" y="796.4" width="1.4" height="8.4"/><polygon points="1069,796.4 1069,804.8 1064,800.6"/><polygon points="1084,795.6 1084,805.6 1093,800.6"/><rect x="1101" y="796.4" width="1.4" height="8.4"/><rect x="1103.6" y="796.4" width="1.4" height="8.4"/><polygon points="1106,796.4 1106,804.8 1111,800.6"/><polygon points="1118,796.4 1118,804.8 1124,800.6"/><rect x="1124.4" y="796.4" width="1.6" height="8.4"/><polygon points="1051.6,815.8 1055.6,812.6 1055.6,819"/><polygon points="1061.4,815.8 1057.4,812.6 1057.4,819"/></g><circle cx="1127" cy="814.6" r="4.2" fill="#d8d8d8"/><circle cx="1127" cy="814.6" r="2" fill="#8a8a8a"/><circle cx="1131.6" cy="819" r="2.6" fill="none" stroke="#f0a41e" stroke-width="1.6"/></svg><div class="fld" style="left:1066.5px;top:19.4px;width:50px;height:13px;background:#585858;color:#bbb;font-size:7.4px">0</div><div class="a" style="left:1110px;top:21.4px;border:2.4px solid transparent;border-bottom:3px solid #ccc;border-top:0"></div><div class="a" style="left:1110px;top:27px;border:2.4px solid transparent;border-top:3px solid #ccc;border-bottom:0"></div><div class="a" style="left:1140.8px;top:4px;width:30.6px;height:30.6px;background:#5d5d5d"></div><svg class="a" style="left:1140.8px;top:4px" width="31" height="31" viewBox="0 0 31 31"><path d="M15 6V22M7 14H23" stroke="#e8e8e8" stroke-width="2.6"/><path d="M14 20L19 17L18 23Z" fill="none" stroke="#48a8b0" stroke-width="1.2"/></svg><div class="btn" style="left:1173.6px;top:4px;width:33.4px;height:13.4px;line-height:13.4px;font-size:7.6px;background:#5a5a5a">Auto</div><div class="btn" style="left:1173.6px;top:19px;width:33.4px;height:14.6px;line-height:14.6px;font-size:7.8px;background:#5a5a5a">Set K.</div><div class="btn" style="left:1211px;top:4px;width:79px;height:13.4px;line-height:13.4px;font-size:7.4px;background:#5a5a5a;text-align:left;padding-left:4px">Selected</div><div class="a" style="left:1282px;top:9px;border:2.6px solid transparent;border-top:3.4px solid #ddd;border-bottom:0"></div><svg class="a" style="left:1210px;top:19.6px" width="16" height="15" viewBox="0 0 16 15"><path d="M2 2.4H14M4.2 13C6.6 9 6.2 5.6 5.6 2.6M11.8 13C9.4 9 9.8 5.6 10.4 2.6" fill="none" stroke="#7fc4c4" stroke-width="1.1"/><polygon points="15.6,14.6 15.6,11.6 12.6,14.6" fill="#ccc"/></svg><div class="btn" style="left:1226.8px;top:19px;width:63.4px;height:14.6px;line-height:14.6px;font-size:7.6px;background:#5c5c5c">Filters...</div><svg class="a" style="left:1295px;top:3px" width="60" height="33" viewBox="1295 793 60 33"><path d="M1300.6 795.6V805M1298.4 797.8L1300.6 795.4L1302.8 797.8M1298.4 802.8L1300.6 805.2L1302.8 802.8" fill="none" stroke="#e4e4e4" stroke-width="1.1"/><circle cx="1306" cy="796" r="1.8" fill="none" stroke="#4ab0b6" stroke-width="1.2"/><ellipse cx="1318" cy="799" rx="5.6" ry="3.4" fill="#e2e2e2"/><circle cx="1316" cy="797" r="3" fill="#e2e2e2"/><circle cx="1320.4" cy="797.6" r="2.6" fill="#d0d0d0"/><rect x="1317.8" y="801.4" width="6.4" height="4.2" fill="#f0a41e"/><rect x="1318.8" y="802.4" width="4.4" height="2.2" fill="#fbe6b0"/><path d="M1333.4 796.4V802A4.3 4.3 0 0 0 1342 802V796.4" fill="none" stroke="#e4e4e4" stroke-width="2.6"/><rect x="1332" y="795" width="3" height="2.4" fill="#4ab0b6"/><rect x="1340.4" y="795" width="3" height="2.4" fill="#4ab0b6"/><path d="M1336 806L1340.6 806" stroke="#f0a41e" stroke-width="2"/><path d="M1349.5 797L1353 800L1349.5 803" fill="none" stroke="#e4e4e4" stroke-width="1.3"/><path d="M1299.4 811.4L1309.2 816.2L1299.4 821.6" fill="none" stroke="#e4e4e4" stroke-width="1.3"/><circle cx="1299.6" cy="816.4" r="1.2" fill="#e4e4e4"/><circle cx="1322.4" cy="811" r="1.4" fill="#e4e4e4"/><path d="M1322.4 813V818.4M1318.6 815.4L1322.4 813.6L1326 815.6M1322.4 818.4L1319.4 823.4M1322.4 818.4L1325.6 823.2" fill="none" stroke="#e4e4e4" stroke-width="1.2"/><polygon points="1328.6,825 1328.6,822.4 1326,825" fill="#ccc"/><circle cx="1338.6" cy="816.4" r="5" fill="#e6e6e6"/><ellipse cx="1338.6" cy="816.4" rx="7.6" ry="2.6" fill="none" stroke="#bdbdbd" stroke-width="1" transform="rotate(-20 1338.6 816.4)"/><rect x="1336.4" y="819.6" width="7" height="4.4" fill="#f0a41e"/><rect x="1337.4" y="820.6" width="5" height="2.4" fill="#fbe6b0"/><rect x="1349.6" y="811.6" width="6" height="10.4" fill="#e8e8e8"/><rect x="1349.6" y="811.6" width="6" height="2.6" fill="#2c2c2c"/></svg></div>
<div class="a" id="bot"></div>

<svg class="a" style="left:0;top:720px" width="1355" height="109" viewBox="0 720 1355 109"><rect x="1013.4" y="753.4" width="303" height="25.3" fill="#fff" fill-opacity="0.65"/><rect x="39.2" y="731" width="72" height="69.6" fill="#c9090d"/><polygon points="54.9,741.6 66.6,748.5 66.6,777.7 75.6,771.0 87.3,778.1 87.3,746.9 94.2,740.6 100.6,747.5 100.6,784.1 90.5,792.1 75.6,780.6 61.3,792.1 48.6,786.2 48.6,748.0" fill="#fdf6f6"/><polyline points="48.9,748.3 61.0,754.3 61.0,791.2" fill="none" stroke="#c9090d" stroke-width="0.9"/><polyline points="93.9,741.1 93.9,775.9 100.3,783.4" fill="none" stroke="#c9090d" stroke-width="0.9"/><text x="117" y="754" font-family="&quot;Liberation Sans&quot;, &quot;Noto Sans CJK SC&quot;, sans-serif" font-size="27" letter-spacing="5.8" fill="#fff">王氏教育集团</text><text x="333" y="754" font-family="&quot;Liberation Sans&quot;, &quot;Noto Sans CJK SC&quot;, sans-serif" font-size="17.5" letter-spacing="2.8" fill="#fff">以人为本</text><rect x="118.3" y="769.2" width="293.5" height="3.5" fill="#fff"/><text x="117.5" y="799.5" font-family="&quot;Liberation Sans&quot;, &quot;Noto Sans CJK SC&quot;, sans-serif" font-size="18" letter-spacing="21.5" fill="#fff">始创于二零零二年</text><text x="1013.3" y="745.5" font-family="&quot;Liberation Sans&quot;, &quot;Noto Sans CJK SC&quot;, sans-serif" font-size="17" letter-spacing="14.6" fill="#fff">获得更多免费精品教程</text><text x="1119.5" y="772.5" font-family="&quot;Liberation Sans&quot;, &quot;Noto Sans CJK SC&quot;, sans-serif" font-weight="bold" font-size="19" letter-spacing="13" fill="#c8090f">绘学霸</text><text x="1013.5" y="799.3" font-family="&quot;Liberation Sans&quot;, &quot;Noto Sans CJK SC&quot;, sans-serif" font-size="17" fill="#fff">在</text><text x="1034" y="800.2" font-family="Liberation Sans" font-weight="bold" font-size="21.6" letter-spacing="1.45" fill="#fff">AppStore</text><text x="1145.3" y="799.3" font-family="&quot;Liberation Sans&quot;, &quot;Noto Sans CJK SC&quot;, sans-serif" font-size="17" fill="#fff">或</text><text x="1166" y="800" font-family="&quot;Liberation Sans&quot;, &quot;Noto Sans CJK SC&quot;, sans-serif" font-weight="bold" font-size="20" letter-spacing="0.6" fill="#fff">应用宝</text><text x="1233" y="799.3" font-family="&quot;Liberation Sans&quot;, &quot;Noto Sans CJK SC&quot;, sans-serif" font-size="17" letter-spacing="4.5" fill="#fff">搜索下载</text></svg>

</body></html>
